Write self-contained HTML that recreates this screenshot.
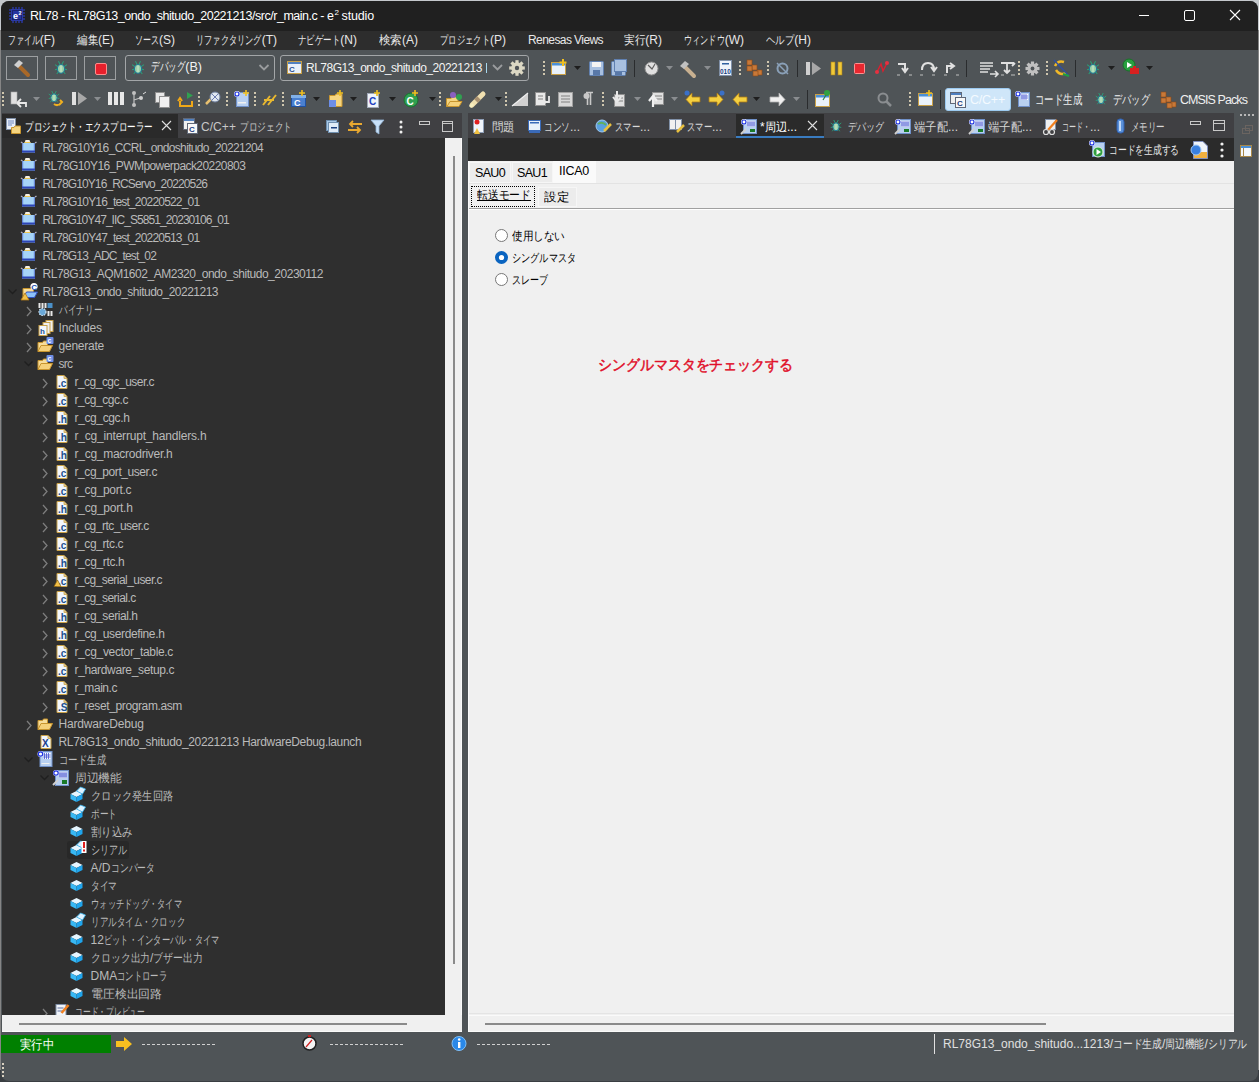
<!DOCTYPE html><html><head><meta charset="utf-8"><style>*{box-sizing:border-box;margin:0;padding:0}html,body{width:1259px;height:1082px;overflow:hidden;background:#c9ced3}body{position:relative;font-family:"Liberation Sans",sans-serif}.a{position:absolute}.t{position:absolute;white-space:nowrap}</style></head><body>
<div class="a" style="left:0px;top:0px;width:1259px;height:1082px;background:#858585;"></div>
<div class="a" style="left:0px;top:0px;width:1259px;height:30px;background:#c4c8cc;"></div>
<div class="a" style="left:0px;top:1070px;width:1259px;height:12px;background:#3a3e42;"></div>
<div class="a" style="left:1px;top:1px;width:1257px;height:1080px;background:#4f5457;border-radius:8px;overflow:hidden"></div>
<div class="a" style="left:1px;top:1px;width:1257px;height:30px;background:#202020;border-radius:8px 8px 0 0"></div>
<div class="a" style="left:1px;top:31px;width:1257px;height:19px;background:#2d2d2d;"></div>
<div class="a" style="left:6px;top:56px;width:32px;height:24px;background:transparent;border:1px solid #9c9fa1"></div>
<div class="a" style="left:45px;top:56px;width:32px;height:24px;background:transparent;border:1px solid #9c9fa1"></div>
<div class="a" style="left:84px;top:56px;width:32px;height:24px;background:transparent;border:1px solid #9c9fa1"></div>
<div class="a" style="left:125px;top:55px;width:150px;height:26px;background:transparent;border:1px solid #a3a6a8;border-radius:3px"></div>
<div class="a" style="left:280px;top:55px;width:249px;height:26px;background:transparent;border:1px solid #a3a6a8;border-radius:3px"></div>
<div class="a" style="left:486px;top:63px;width:1px;height:10px;background:#a8d8ee;"></div>
<div class="a" style="left:2px;top:113px;width:460px;height:25px;background:#404043;"></div>
<div class="a" style="left:2px;top:138px;width:460px;height:1px;background:#4b4c50;"></div>
<div class="a" style="left:2px;top:114px;width:176px;height:25px;background:#2a2a2a;"></div>
<div class="a" style="left:2px;top:138px;width:443px;height:877px;background:#2f2f2f;"></div>
<div class="a" style="left:445px;top:138px;width:17px;height:877px;background:#f0f0f0;"></div>
<div class="a" style="left:453px;top:156px;width:2px;height:808px;background:#8a8a8a;"></div>
<div class="a" style="left:468px;top:113px;width:766px;height:25px;background:#404043;"></div>
<div class="a" style="left:736px;top:114px;width:88px;height:24px;background:#2a2a2a;"></div>
<div class="a" style="left:736px;top:136px;width:88px;height:2px;background:#3a7cc0;"></div>
<div class="a" style="left:468px;top:138px;width:766px;height:23px;background:#2b2b2b;"></div>
<div class="a" style="left:468px;top:161px;width:766px;height:871px;background:#f0f0f0;"></div>
<div class="a" style="left:468px;top:161px;width:1px;height:871px;background:#fafafa;"></div>
<div class="a" style="left:469px;top:1013px;width:765px;height:1px;background:#e4e4e4;"></div>
<div class="a" style="left:469px;top:1015px;width:765px;height:1px;background:#fafafa;"></div>
<div class="a" style="left:468px;top:1031px;width:766px;height:1px;background:#fafafa;"></div>
<div class="a" style="left:461px;top:138px;width:1px;height:894px;background:#fafafa;"></div>
<div class="a" style="left:469px;top:162px;width:42px;height:21px;background:#ececec;border:1px solid #f6f6f6"></div>
<div class="a" style="left:512px;top:162px;width:41px;height:21px;background:#ececec;border:1px solid #f6f6f6"></div>
<div class="a" style="left:553px;top:161px;width:43px;height:23px;background:#fafafa;"></div>
<div class="a" style="left:469px;top:183px;width:765px;height:1px;background:#e3e3e3;"></div>
<div class="a" style="left:538px;top:187px;width:39px;height:20px;background:#ececec;border:1px solid #f6f6f6"></div>
<div class="a" style="left:471px;top:186px;width:64px;height:21px;background:transparent;border:1px dotted #000"></div>
<div class="a" style="left:477px;top:200px;width:54px;height:1px;background:#000;"></div>
<div class="a" style="left:469px;top:208px;width:765px;height:1px;background:#a0a0a0;"></div>
<div class="a" style="left:469px;top:209px;width:765px;height:1px;background:#ffffff;"></div>
<div class="a" style="left:485px;top:1023px;width:561px;height:2px;background:#8a8a8a;"></div>
<div class="a" style="left:1px;top:1035px;width:110px;height:18px;background:#008000;"></div>
<div class="a" style="left:934px;top:1034px;width:1px;height:20px;background:#e0e0e0;"></div>
<div class="a" style="left:67px;top:841px;width:62px;height:18px;background:#282828;border-radius:3px"></div>
<div class="a" style="left:945px;top:88px;width:66px;height:23px;background:#cfe6f9;border:1px solid #9ccaf0;border-radius:3px"></div>
<svg class="a" style="left:0;top:0" width="1259" height="1082" viewBox="0 0 1259 1082"><rect x="12.3" y="7" width="1.4" height="3" fill="#2b3aa6"/><rect x="12.3" y="20" width="1.4" height="3" fill="#2b3aa6"/><rect x="9" y="9.3" width="3" height="1.4" fill="#2b3aa6"/><rect x="22" y="9.3" width="3" height="1.4" fill="#2b3aa6"/><rect x="15.3" y="7" width="1.4" height="3" fill="#2b3aa6"/><rect x="15.3" y="20" width="1.4" height="3" fill="#2b3aa6"/><rect x="9" y="12.3" width="3" height="1.4" fill="#2b3aa6"/><rect x="22" y="12.3" width="3" height="1.4" fill="#2b3aa6"/><rect x="18.3" y="7" width="1.4" height="3" fill="#2b3aa6"/><rect x="18.3" y="20" width="1.4" height="3" fill="#2b3aa6"/><rect x="9" y="15.3" width="3" height="1.4" fill="#2b3aa6"/><rect x="22" y="15.3" width="3" height="1.4" fill="#2b3aa6"/><rect x="21.3" y="7" width="1.4" height="3" fill="#2b3aa6"/><rect x="21.3" y="20" width="1.4" height="3" fill="#2b3aa6"/><rect x="9" y="18.3" width="3" height="1.4" fill="#2b3aa6"/><rect x="22" y="18.3" width="3" height="1.4" fill="#2b3aa6"/><rect x="11" y="9" width="12" height="12" fill="#2b3aa6"/><rect x="12.5" y="10.5" width="9" height="9" fill="#2534a0" stroke="#1a2470" stroke-width="1"/><text x="13" y="19" font-size="9" font-weight="bold" fill="#fff" font-family="Liberation Sans">e</text><text x="18.6" y="14.5" font-size="5.5" font-weight="bold" fill="#fff" font-family="Liberation Sans">2</text><rect x="1139" y="15" width="10" height="1" fill="#fff"/><rect x="1184.5" y="10.5" width="10" height="10" rx="1.5" fill="none" stroke="#fff" stroke-width="1"/><path d="M1230 10 L1240 20 M1240 10 L1230 20" stroke="#fff" stroke-width="1.1"/><path d="M259.5 65 L264 69.5 L268.5 65" fill="none" stroke="#9a9c9e" stroke-width="1.8"/><path d="M493 65 L497.5 69.5 L502 65" fill="none" stroke="#9a9c9e" stroke-width="1.8"/><path d="M162 121 L171 130 M171 121 L162 130" stroke="#e0e0e0" stroke-width="1.1"/><path d="M808 121 L817 130 M817 121 L808 130" stroke="#e0e0e0" stroke-width="1.1"/><circle cx="501.5" cy="235.5" r="6" fill="#fff" stroke="#777" stroke-width="1"/><circle cx="501.5" cy="257.5" r="6.5" fill="#0a64c0"/><circle cx="501.5" cy="257.5" r="2.6" fill="#fff"/><circle cx="501.5" cy="279.5" r="6" fill="#fff" stroke="#777" stroke-width="1"/><line x1="142" y1="1044.5" x2="217" y2="1044.5" stroke="#d0d0d0" stroke-width="1" stroke-dasharray="3,2"/><line x1="330" y1="1044.5" x2="403" y2="1044.5" stroke="#d0d0d0" stroke-width="1" stroke-dasharray="3,2"/><line x1="477" y1="1044.5" x2="551" y2="1044.5" stroke="#d0d0d0" stroke-width="1" stroke-dasharray="3,2"/><path d="M24.5 143 L25.5 140 H29.5 L30.5 143 Z" fill="#f4f0e4"/><rect x="24.5" y="142" width="6" height="1.2" fill="#f0c850"/><path d="M21.0 142 L22.5 143 M35.0 143 L36.5 142" stroke="#b0b0c0" stroke-width="1.5"/><rect x="22.0" y="143" width="13" height="9.5" fill="#a6d4f8"/><rect x="22.0" y="143" width="1.2" height="9.5" fill="#6a8ad8"/><rect x="33.8" y="143" width="1.2" height="9.5" fill="#6a8ad8"/><rect x="22.0" y="150.5" width="13" height="2" fill="#2c44b8"/><path d="M24.5 161 L25.5 158 H29.5 L30.5 161 Z" fill="#f4f0e4"/><rect x="24.5" y="160" width="6" height="1.2" fill="#f0c850"/><path d="M21.0 160 L22.5 161 M35.0 161 L36.5 160" stroke="#b0b0c0" stroke-width="1.5"/><rect x="22.0" y="161" width="13" height="9.5" fill="#a6d4f8"/><rect x="22.0" y="161" width="1.2" height="9.5" fill="#6a8ad8"/><rect x="33.8" y="161" width="1.2" height="9.5" fill="#6a8ad8"/><rect x="22.0" y="168.5" width="13" height="2" fill="#2c44b8"/><path d="M24.5 179 L25.5 176 H29.5 L30.5 179 Z" fill="#f4f0e4"/><rect x="24.5" y="178" width="6" height="1.2" fill="#f0c850"/><path d="M21.0 178 L22.5 179 M35.0 179 L36.5 178" stroke="#b0b0c0" stroke-width="1.5"/><rect x="22.0" y="179" width="13" height="9.5" fill="#a6d4f8"/><rect x="22.0" y="179" width="1.2" height="9.5" fill="#6a8ad8"/><rect x="33.8" y="179" width="1.2" height="9.5" fill="#6a8ad8"/><rect x="22.0" y="186.5" width="13" height="2" fill="#2c44b8"/><path d="M24.5 197 L25.5 194 H29.5 L30.5 197 Z" fill="#f4f0e4"/><rect x="24.5" y="196" width="6" height="1.2" fill="#f0c850"/><path d="M21.0 196 L22.5 197 M35.0 197 L36.5 196" stroke="#b0b0c0" stroke-width="1.5"/><rect x="22.0" y="197" width="13" height="9.5" fill="#a6d4f8"/><rect x="22.0" y="197" width="1.2" height="9.5" fill="#6a8ad8"/><rect x="33.8" y="197" width="1.2" height="9.5" fill="#6a8ad8"/><rect x="22.0" y="204.5" width="13" height="2" fill="#2c44b8"/><path d="M24.5 215 L25.5 212 H29.5 L30.5 215 Z" fill="#f4f0e4"/><rect x="24.5" y="214" width="6" height="1.2" fill="#f0c850"/><path d="M21.0 214 L22.5 215 M35.0 215 L36.5 214" stroke="#b0b0c0" stroke-width="1.5"/><rect x="22.0" y="215" width="13" height="9.5" fill="#a6d4f8"/><rect x="22.0" y="215" width="1.2" height="9.5" fill="#6a8ad8"/><rect x="33.8" y="215" width="1.2" height="9.5" fill="#6a8ad8"/><rect x="22.0" y="222.5" width="13" height="2" fill="#2c44b8"/><path d="M24.5 233 L25.5 230 H29.5 L30.5 233 Z" fill="#f4f0e4"/><rect x="24.5" y="232" width="6" height="1.2" fill="#f0c850"/><path d="M21.0 232 L22.5 233 M35.0 233 L36.5 232" stroke="#b0b0c0" stroke-width="1.5"/><rect x="22.0" y="233" width="13" height="9.5" fill="#a6d4f8"/><rect x="22.0" y="233" width="1.2" height="9.5" fill="#6a8ad8"/><rect x="33.8" y="233" width="1.2" height="9.5" fill="#6a8ad8"/><rect x="22.0" y="240.5" width="13" height="2" fill="#2c44b8"/><path d="M24.5 251 L25.5 248 H29.5 L30.5 251 Z" fill="#f4f0e4"/><rect x="24.5" y="250" width="6" height="1.2" fill="#f0c850"/><path d="M21.0 250 L22.5 251 M35.0 251 L36.5 250" stroke="#b0b0c0" stroke-width="1.5"/><rect x="22.0" y="251" width="13" height="9.5" fill="#a6d4f8"/><rect x="22.0" y="251" width="1.2" height="9.5" fill="#6a8ad8"/><rect x="33.8" y="251" width="1.2" height="9.5" fill="#6a8ad8"/><rect x="22.0" y="258.5" width="13" height="2" fill="#2c44b8"/><path d="M24.5 269 L25.5 266 H29.5 L30.5 269 Z" fill="#f4f0e4"/><rect x="24.5" y="268" width="6" height="1.2" fill="#f0c850"/><path d="M21.0 268 L22.5 269 M35.0 269 L36.5 268" stroke="#b0b0c0" stroke-width="1.5"/><rect x="22.0" y="269" width="13" height="9.5" fill="#a6d4f8"/><rect x="22.0" y="269" width="1.2" height="9.5" fill="#6a8ad8"/><rect x="33.8" y="269" width="1.2" height="9.5" fill="#6a8ad8"/><rect x="22.0" y="276.5" width="13" height="2" fill="#2c44b8"/><path d="M23.0 288.5 H33.5 V297 H23.0 Z" fill="#f7dd9a" stroke="#c8952e" stroke-width="1"/><path d="M23.5 297.5 L26.5 292 H37.5 L34.5 297.5 Z" fill="#8cc0f8" stroke="#3050c0" stroke-width="1"/><circle cx="34.0" cy="286.5" r="3.6" fill="#fff"/><text x="31.3" y="289.5" font-size="8" font-weight="bold" fill="#1a50b0" font-family="Liberation Sans">C</text><path d="M21.0 300 L25.0 293 L29.0 300 Z" fill="#f2c048" stroke="#b07818" stroke-width="0.8"/><path d="M8.5 289.5 L12.5 293.5 L16.5 289.5" fill="none" stroke="#1f1f1f" stroke-width="1.3"/><rect x="38.5" y="303" width="2" height="5" fill="#e8e8e8"/><rect x="41.5" y="303" width="2" height="5" fill="#e8e8e8"/><rect x="44.5" y="303" width="2" height="5" fill="#e8e8e8"/><rect x="47.5" y="303" width="5" height="5" fill="#4a90c8"/><circle cx="42.5" cy="312" r="3.5" fill="#6aa8d8" stroke="#d0e4f4" stroke-width="1.2" stroke-dasharray="1.5,1"/><rect x="47.5" y="311" width="2" height="5" fill="#e8e8e8"/><rect x="50.5" y="311" width="2" height="5" fill="#e8e8e8"/><path d="M27.0 307 L31.0 311.5 L27.0 316" fill="none" stroke="#7d7d7d" stroke-width="1.3"/><rect x="46.0" y="320.5" width="7" height="11" fill="#f0f0f0" stroke="#c9a24a"/><rect x="43.0" y="322.5" width="7" height="11" fill="#f0f0f0" stroke="#c9a24a"/><rect x="39.0" y="325.5" width="8" height="10" fill="#f4f8fd" stroke="#c9a24a"/><text x="40.0" y="334" font-size="8" font-weight="bold" fill="#1a4f8f" font-family="Liberation Sans">h</text><path d="M27.0 325 L31.0 329.5 L27.0 334" fill="none" stroke="#7d7d7d" stroke-width="1.3"/><path d="M38.0 342.5 H42.5 L43.5 341 H47.5 V351.5 H38.0 Z" fill="#f7dd9a" stroke="#c8952e" stroke-width="1"/><path d="M38.0 351.5 L41.0 345.5 H52.5 L49.5 351.5 Z" fill="#f5d17a" stroke="#c8952e" stroke-width="1"/><rect x="46.5" y="337" width="7" height="7" rx="1" fill="#6d8ee8"/><text x="47.5" y="343" font-size="7" font-weight="bold" fill="#fff" font-family="Liberation Sans">c</text><path d="M27.0 343 L31.0 347.5 L27.0 352" fill="none" stroke="#7d7d7d" stroke-width="1.3"/><path d="M38.0 360.5 H42.5 L43.5 359 H47.5 V369.5 H38.0 Z" fill="#f7dd9a" stroke="#c8952e" stroke-width="1"/><path d="M38.0 369.5 L41.0 363.5 H52.5 L49.5 369.5 Z" fill="#f5d17a" stroke="#c8952e" stroke-width="1"/><rect x="46.5" y="355" width="7" height="7" rx="1" fill="#6d8ee8"/><text x="47.5" y="361" font-size="7" font-weight="bold" fill="#fff" font-family="Liberation Sans">c</text><path d="M24.5 361.5 L28.5 365.5 L32.5 361.5" fill="none" stroke="#1f1f1f" stroke-width="1.3"/><path d="M57.0 375.5 H64.0 L67.0 378.5 V388.5 H57.0 Z" fill="#f2f7fd" stroke="#c9a24a" stroke-width="1"/><path d="M64.0 375.5 V378.5 H67.0" fill="#e8cf8a" stroke="#c9a24a" stroke-width="0.8"/><text x="58.0" y="386.5" font-size="10" font-weight="bold" fill="#1a4f8f" font-family="Liberation Sans">.c</text><path d="M43.0 379 L47.0 383.5 L43.0 388" fill="none" stroke="#7d7d7d" stroke-width="1.3"/><path d="M57.0 393.5 H64.0 L67.0 396.5 V406.5 H57.0 Z" fill="#f2f7fd" stroke="#c9a24a" stroke-width="1"/><path d="M64.0 393.5 V396.5 H67.0" fill="#e8cf8a" stroke="#c9a24a" stroke-width="0.8"/><text x="58.0" y="404.5" font-size="10" font-weight="bold" fill="#1a4f8f" font-family="Liberation Sans">.c</text><path d="M43.0 397 L47.0 401.5 L43.0 406" fill="none" stroke="#7d7d7d" stroke-width="1.3"/><path d="M57.0 411.5 H64.0 L67.0 414.5 V424.5 H57.0 Z" fill="#f2f7fd" stroke="#c9a24a" stroke-width="1"/><path d="M64.0 411.5 V414.5 H67.0" fill="#e8cf8a" stroke="#c9a24a" stroke-width="0.8"/><text x="58.0" y="422.5" font-size="10" font-weight="bold" fill="#1a4f8f" font-family="Liberation Sans">.h</text><path d="M43.0 415 L47.0 419.5 L43.0 424" fill="none" stroke="#7d7d7d" stroke-width="1.3"/><path d="M57.0 429.5 H64.0 L67.0 432.5 V442.5 H57.0 Z" fill="#f2f7fd" stroke="#c9a24a" stroke-width="1"/><path d="M64.0 429.5 V432.5 H67.0" fill="#e8cf8a" stroke="#c9a24a" stroke-width="0.8"/><text x="58.0" y="440.5" font-size="10" font-weight="bold" fill="#1a4f8f" font-family="Liberation Sans">.h</text><path d="M43.0 433 L47.0 437.5 L43.0 442" fill="none" stroke="#7d7d7d" stroke-width="1.3"/><path d="M57.0 447.5 H64.0 L67.0 450.5 V460.5 H57.0 Z" fill="#f2f7fd" stroke="#c9a24a" stroke-width="1"/><path d="M64.0 447.5 V450.5 H67.0" fill="#e8cf8a" stroke="#c9a24a" stroke-width="0.8"/><text x="58.0" y="458.5" font-size="10" font-weight="bold" fill="#1a4f8f" font-family="Liberation Sans">.h</text><path d="M43.0 451 L47.0 455.5 L43.0 460" fill="none" stroke="#7d7d7d" stroke-width="1.3"/><path d="M57.0 465.5 H64.0 L67.0 468.5 V478.5 H57.0 Z" fill="#f2f7fd" stroke="#c9a24a" stroke-width="1"/><path d="M64.0 465.5 V468.5 H67.0" fill="#e8cf8a" stroke="#c9a24a" stroke-width="0.8"/><text x="58.0" y="476.5" font-size="10" font-weight="bold" fill="#1a4f8f" font-family="Liberation Sans">.c</text><path d="M43.0 469 L47.0 473.5 L43.0 478" fill="none" stroke="#7d7d7d" stroke-width="1.3"/><path d="M57.0 483.5 H64.0 L67.0 486.5 V496.5 H57.0 Z" fill="#f2f7fd" stroke="#c9a24a" stroke-width="1"/><path d="M64.0 483.5 V486.5 H67.0" fill="#e8cf8a" stroke="#c9a24a" stroke-width="0.8"/><text x="58.0" y="494.5" font-size="10" font-weight="bold" fill="#1a4f8f" font-family="Liberation Sans">.c</text><path d="M43.0 487 L47.0 491.5 L43.0 496" fill="none" stroke="#7d7d7d" stroke-width="1.3"/><path d="M57.0 501.5 H64.0 L67.0 504.5 V514.5 H57.0 Z" fill="#f2f7fd" stroke="#c9a24a" stroke-width="1"/><path d="M64.0 501.5 V504.5 H67.0" fill="#e8cf8a" stroke="#c9a24a" stroke-width="0.8"/><text x="58.0" y="512.5" font-size="10" font-weight="bold" fill="#1a4f8f" font-family="Liberation Sans">.h</text><path d="M43.0 505 L47.0 509.5 L43.0 514" fill="none" stroke="#7d7d7d" stroke-width="1.3"/><path d="M57.0 519.5 H64.0 L67.0 522.5 V532.5 H57.0 Z" fill="#f2f7fd" stroke="#c9a24a" stroke-width="1"/><path d="M64.0 519.5 V522.5 H67.0" fill="#e8cf8a" stroke="#c9a24a" stroke-width="0.8"/><text x="58.0" y="530.5" font-size="10" font-weight="bold" fill="#1a4f8f" font-family="Liberation Sans">.c</text><path d="M43.0 523 L47.0 527.5 L43.0 532" fill="none" stroke="#7d7d7d" stroke-width="1.3"/><path d="M57.0 537.5 H64.0 L67.0 540.5 V550.5 H57.0 Z" fill="#f2f7fd" stroke="#c9a24a" stroke-width="1"/><path d="M64.0 537.5 V540.5 H67.0" fill="#e8cf8a" stroke="#c9a24a" stroke-width="0.8"/><text x="58.0" y="548.5" font-size="10" font-weight="bold" fill="#1a4f8f" font-family="Liberation Sans">.c</text><path d="M43.0 541 L47.0 545.5 L43.0 550" fill="none" stroke="#7d7d7d" stroke-width="1.3"/><path d="M57.0 555.5 H64.0 L67.0 558.5 V568.5 H57.0 Z" fill="#f2f7fd" stroke="#c9a24a" stroke-width="1"/><path d="M64.0 555.5 V558.5 H67.0" fill="#e8cf8a" stroke="#c9a24a" stroke-width="0.8"/><text x="58.0" y="566.5" font-size="10" font-weight="bold" fill="#1a4f8f" font-family="Liberation Sans">.h</text><path d="M43.0 559 L47.0 563.5 L43.0 568" fill="none" stroke="#7d7d7d" stroke-width="1.3"/><path d="M57.0 573.5 H64.0 L67.0 576.5 V586.5 H57.0 Z" fill="#f2f7fd" stroke="#c9a24a" stroke-width="1"/><path d="M64.0 573.5 V576.5 H67.0" fill="#e8cf8a" stroke="#c9a24a" stroke-width="0.8"/><text x="58.0" y="584.5" font-size="10" font-weight="bold" fill="#1a4f8f" font-family="Liberation Sans">.c</text><path d="M54.0 586.5 L57.5 580 L61.0 586.5 Z" fill="#f2c048" stroke="#8a6010" stroke-width="0.7"/><path d="M43.0 577 L47.0 581.5 L43.0 586" fill="none" stroke="#7d7d7d" stroke-width="1.3"/><path d="M57.0 591.5 H64.0 L67.0 594.5 V604.5 H57.0 Z" fill="#f2f7fd" stroke="#c9a24a" stroke-width="1"/><path d="M64.0 591.5 V594.5 H67.0" fill="#e8cf8a" stroke="#c9a24a" stroke-width="0.8"/><text x="58.0" y="602.5" font-size="10" font-weight="bold" fill="#1a4f8f" font-family="Liberation Sans">.c</text><path d="M43.0 595 L47.0 599.5 L43.0 604" fill="none" stroke="#7d7d7d" stroke-width="1.3"/><path d="M57.0 609.5 H64.0 L67.0 612.5 V622.5 H57.0 Z" fill="#f2f7fd" stroke="#c9a24a" stroke-width="1"/><path d="M64.0 609.5 V612.5 H67.0" fill="#e8cf8a" stroke="#c9a24a" stroke-width="0.8"/><text x="58.0" y="620.5" font-size="10" font-weight="bold" fill="#1a4f8f" font-family="Liberation Sans">.h</text><path d="M43.0 613 L47.0 617.5 L43.0 622" fill="none" stroke="#7d7d7d" stroke-width="1.3"/><path d="M57.0 627.5 H64.0 L67.0 630.5 V640.5 H57.0 Z" fill="#f2f7fd" stroke="#c9a24a" stroke-width="1"/><path d="M64.0 627.5 V630.5 H67.0" fill="#e8cf8a" stroke="#c9a24a" stroke-width="0.8"/><text x="58.0" y="638.5" font-size="10" font-weight="bold" fill="#1a4f8f" font-family="Liberation Sans">.h</text><path d="M43.0 631 L47.0 635.5 L43.0 640" fill="none" stroke="#7d7d7d" stroke-width="1.3"/><path d="M57.0 645.5 H64.0 L67.0 648.5 V658.5 H57.0 Z" fill="#f2f7fd" stroke="#c9a24a" stroke-width="1"/><path d="M64.0 645.5 V648.5 H67.0" fill="#e8cf8a" stroke="#c9a24a" stroke-width="0.8"/><text x="58.0" y="656.5" font-size="10" font-weight="bold" fill="#1a4f8f" font-family="Liberation Sans">.c</text><path d="M43.0 649 L47.0 653.5 L43.0 658" fill="none" stroke="#7d7d7d" stroke-width="1.3"/><path d="M57.0 663.5 H64.0 L67.0 666.5 V676.5 H57.0 Z" fill="#f2f7fd" stroke="#c9a24a" stroke-width="1"/><path d="M64.0 663.5 V666.5 H67.0" fill="#e8cf8a" stroke="#c9a24a" stroke-width="0.8"/><text x="58.0" y="674.5" font-size="10" font-weight="bold" fill="#1a4f8f" font-family="Liberation Sans">.c</text><path d="M43.0 667 L47.0 671.5 L43.0 676" fill="none" stroke="#7d7d7d" stroke-width="1.3"/><path d="M57.0 681.5 H64.0 L67.0 684.5 V694.5 H57.0 Z" fill="#f2f7fd" stroke="#c9a24a" stroke-width="1"/><path d="M64.0 681.5 V684.5 H67.0" fill="#e8cf8a" stroke="#c9a24a" stroke-width="0.8"/><text x="58.0" y="692.5" font-size="10" font-weight="bold" fill="#1a4f8f" font-family="Liberation Sans">.c</text><path d="M43.0 685 L47.0 689.5 L43.0 694" fill="none" stroke="#7d7d7d" stroke-width="1.3"/><path d="M57.0 699.5 H64.0 L67.0 702.5 V712.5 H57.0 Z" fill="#f2f7fd" stroke="#c9a24a" stroke-width="1"/><path d="M64.0 699.5 V702.5 H67.0" fill="#e8cf8a" stroke="#c9a24a" stroke-width="0.8"/><text x="58.0" y="710.5" font-size="10" font-weight="bold" fill="#1a4f8f" font-family="Liberation Sans">.S</text><path d="M43.0 703 L47.0 707.5 L43.0 712" fill="none" stroke="#7d7d7d" stroke-width="1.3"/><path d="M38.0 720.5 H42.5 L43.5 719 H47.5 V729.5 H38.0 Z" fill="#f7dd9a" stroke="#c8952e" stroke-width="1"/><path d="M38.0 729.5 L41.0 723.5 H52.5 L49.5 729.5 Z" fill="#f5d17a" stroke="#c8952e" stroke-width="1"/><path d="M27.0 721 L31.0 725.5 L27.0 730" fill="none" stroke="#7d7d7d" stroke-width="1.3"/><path d="M41.0 735.5 H48.0 L51.0 738.5 V748.5 H41.0 Z" fill="#f2f7fd" stroke="#c9a24a" stroke-width="1"/><path d="M48.0 735.5 V738.5 H51.0" fill="#e8cf8a" stroke="#c9a24a" stroke-width="0.8"/><text x="42.0" y="747" font-size="10" font-weight="bold" fill="#1a3f8f" font-family="Liberation Sans">X</text><rect x="40.0" y="751.5" width="12" height="15" fill="#b8d0f0" stroke="#7090c8"/><rect x="43.5" y="753" width="7" height="6" fill="#fff"/><path d="M44.5 753 V759 M46.5 753 V759 M48.5 753 V759 M43.5 755 H50.5 M43.5 757 H50.5" stroke="#4050d0" stroke-width="0.8"/><rect x="41.5" y="763" width="8" height="1" fill="#f0f0f0"/><circle cx="40.5" cy="754" r="3" fill="#fff"/><circle cx="40.5" cy="754" r="2.2" fill="none" stroke="#1a30e0" stroke-width="1.2"/><path d="M24.5 757.5 L28.5 761.5 L32.5 757.5" fill="none" stroke="#1f1f1f" stroke-width="1.3"/><rect x="55.5" y="770.5" width="13" height="15" fill="#b8d0f0" stroke="#7090c8"/><rect x="59.0" y="772" width="8" height="6" fill="#fff"/><path d="M60.0 772 V778 M62.0 772 V778 M64.0 772 V778 M66.0 772 V778 M59.0 774 H67.0 M59.0 776 H67.0" stroke="#4050d0" stroke-width="0.8"/><rect x="62.0" y="780" width="5" height="4" fill="#1a7a2a"/><path d="M53.0 785 L58.0 780" stroke="#d0d0d0" stroke-width="2"/><circle cx="56.0" cy="773" r="3" fill="#fff"/><circle cx="56.0" cy="773" r="2.2" fill="none" stroke="#1a30e0" stroke-width="1.2"/><path d="M40.5 775.5 L44.5 779.5 L48.5 775.5" fill="none" stroke="#1f1f1f" stroke-width="1.3"/><path d="M70.5 794 L76.5 791 L82.5 794 L76.5 797 Z" fill="#e6f6ff"/><path d="M70.5 794 L76.5 797 V802 L70.5 799 Z" fill="#38b8f4"/><path d="M82.5 794 L76.5 797 V802 L82.5 799 Z" fill="#1ea4ec"/><path d="M76.5 791 L80.5 787 L85.5 789 L82.5 794 Z" fill="#dff2ff" stroke="#38b8f4" stroke-width="0.8"/><path d="M70.5 812 L76.5 809 L82.5 812 L76.5 815 Z" fill="#e6f6ff"/><path d="M70.5 812 L76.5 815 V820 L70.5 817 Z" fill="#38b8f4"/><path d="M82.5 812 L76.5 815 V820 L82.5 817 Z" fill="#1ea4ec"/><path d="M76.5 809 L80.5 805 L85.5 807 L82.5 812 Z" fill="#dff2ff" stroke="#38b8f4" stroke-width="0.8"/><path d="M70.5 829 L76.5 826 L82.5 829 L76.5 832 Z" fill="#e6f6ff"/><path d="M70.5 829 L76.5 832 V837 L70.5 834 Z" fill="#38b8f4"/><path d="M82.5 829 L76.5 832 V837 L82.5 834 Z" fill="#1ea4ec"/><path d="M70.5 848 L76.5 845 L82.5 848 L76.5 851 Z" fill="#e6f6ff"/><path d="M70.5 848 L76.5 851 V856 L70.5 853 Z" fill="#38b8f4"/><path d="M82.5 848 L76.5 851 V856 L82.5 853 Z" fill="#1ea4ec"/><path d="M76.5 845 L80.5 841 L85.5 843 L82.5 848 Z" fill="#dff2ff" stroke="#38b8f4" stroke-width="0.8"/><rect x="81.5" y="841" width="5" height="12" fill="#fff"/><rect x="83.0" y="842" width="2" height="6" fill="#e02020"/><rect x="83.0" y="849.5" width="2" height="2" fill="#e02020"/><path d="M70.5 865 L76.5 862 L82.5 865 L76.5 868 Z" fill="#e6f6ff"/><path d="M70.5 865 L76.5 868 V873 L70.5 870 Z" fill="#38b8f4"/><path d="M82.5 865 L76.5 868 V873 L82.5 870 Z" fill="#1ea4ec"/><path d="M70.5 883 L76.5 880 L82.5 883 L76.5 886 Z" fill="#e6f6ff"/><path d="M70.5 883 L76.5 886 V891 L70.5 888 Z" fill="#38b8f4"/><path d="M82.5 883 L76.5 886 V891 L82.5 888 Z" fill="#1ea4ec"/><path d="M70.5 901 L76.5 898 L82.5 901 L76.5 904 Z" fill="#e6f6ff"/><path d="M70.5 901 L76.5 904 V909 L70.5 906 Z" fill="#38b8f4"/><path d="M82.5 901 L76.5 904 V909 L82.5 906 Z" fill="#1ea4ec"/><path d="M70.5 920 L76.5 917 L82.5 920 L76.5 923 Z" fill="#e6f6ff"/><path d="M70.5 920 L76.5 923 V928 L70.5 925 Z" fill="#38b8f4"/><path d="M82.5 920 L76.5 923 V928 L82.5 925 Z" fill="#1ea4ec"/><path d="M76.5 917 L80.5 913 L85.5 915 L82.5 920 Z" fill="#dff2ff" stroke="#38b8f4" stroke-width="0.8"/><path d="M70.5 937 L76.5 934 L82.5 937 L76.5 940 Z" fill="#e6f6ff"/><path d="M70.5 937 L76.5 940 V945 L70.5 942 Z" fill="#38b8f4"/><path d="M82.5 937 L76.5 940 V945 L82.5 942 Z" fill="#1ea4ec"/><path d="M70.5 955 L76.5 952 L82.5 955 L76.5 958 Z" fill="#e6f6ff"/><path d="M70.5 955 L76.5 958 V963 L70.5 960 Z" fill="#38b8f4"/><path d="M82.5 955 L76.5 958 V963 L82.5 960 Z" fill="#1ea4ec"/><path d="M70.5 973 L76.5 970 L82.5 973 L76.5 976 Z" fill="#e6f6ff"/><path d="M70.5 973 L76.5 976 V981 L70.5 978 Z" fill="#38b8f4"/><path d="M82.5 973 L76.5 976 V981 L82.5 978 Z" fill="#1ea4ec"/><path d="M70.5 991 L76.5 988 L82.5 991 L76.5 994 Z" fill="#e6f6ff"/><path d="M70.5 991 L76.5 994 V999 L70.5 996 Z" fill="#38b8f4"/><path d="M82.5 991 L76.5 994 V999 L82.5 996 Z" fill="#1ea4ec"/><rect x="56.0" y="1004.5" width="10" height="13" fill="#f0f4fa" stroke="#8090a8"/><path d="M57.5 1008 H63.5 M57.5 1011 H63.5" stroke="#6070a0"/><path d="M61.5 1013 L68.5 1005" stroke="#f08020" stroke-width="2.5"/><path d="M43.0 1009 L47.0 1013.5 L43.0 1018" fill="none" stroke="#7d7d7d" stroke-width="1.3"/><path d="M19 66 L28 75" stroke="#a86828" stroke-width="4" stroke-linecap="round"/><path d="M14 65 L19 60 L23 63 L18 68 Z" fill="#d0d0d0"/><g transform="translate(61,68) scale(0.85)"><path d="M-7 -4 L-3 -1 M7 -4 L3 -1 M-7 2 L-3 1 M7 2 L3 1 M-5 7 L-2 3 M5 7 L2 3 M-3 -8 L-1 -4 M3 -8 L1 -4" stroke="#2aa078" stroke-width="1.2"/><ellipse cx="0" cy="1" rx="4.2" ry="5.2" fill="#9ad0a8" stroke="#1a7a9a" stroke-width="1.3"/><path d="M0 -3 V5" stroke="#d8f0d8" stroke-width="1"/></g><rect x="95.5" y="63.5" width="11" height="11" rx="1.5" fill="#e8202c" stroke="#ff8c8c" stroke-width="1"/><g transform="translate(138,68) scale(0.85)"><path d="M-7 -4 L-3 -1 M7 -4 L3 -1 M-7 2 L-3 1 M7 2 L3 1 M-5 7 L-2 3 M5 7 L2 3 M-3 -8 L-1 -4 M3 -8 L1 -4" stroke="#2aa078" stroke-width="1.2"/><ellipse cx="0" cy="1" rx="4.2" ry="5.2" fill="#9ad0a8" stroke="#1a7a9a" stroke-width="1.3"/><path d="M0 -3 V5" stroke="#d8f0d8" stroke-width="1"/></g><rect x="287.5" y="61.5" width="14" height="12" fill="#e8f0fa" stroke="#c8a048"/><rect x="288" y="62" width="13" height="2" fill="#5080c0"/><text x="289" y="72" font-size="8" font-weight="bold" fill="#2a5090" font-family="Liberation Sans">C</text><g transform="translate(517,68)"><rect x="-1.6" y="-7.8" width="3.2" height="15.6" fill="#dcd8c4" transform="rotate(0)"/><rect x="-1.6" y="-7.8" width="3.2" height="15.6" fill="#dcd8c4" transform="rotate(45)"/><rect x="-1.6" y="-7.8" width="3.2" height="15.6" fill="#dcd8c4" transform="rotate(90)"/><rect x="-1.6" y="-7.8" width="3.2" height="15.6" fill="#dcd8c4" transform="rotate(135)"/><circle r="5.8" fill="#dcd8c4"/><circle r="2.20" fill="#4f5457"/></g><rect x="543" y="61" width="2" height="2" fill="#cfc6ae"/><rect x="543" y="65" width="2" height="2" fill="#cfc6ae"/><rect x="543" y="69" width="2" height="2" fill="#cfc6ae"/><rect x="543" y="73" width="2" height="2" fill="#cfc6ae"/><rect x="551.5" y="62.5" width="14" height="12" fill="#eaf2fb" stroke="#c8a048"/><rect x="552" y="63" width="13" height="2.5" fill="#4a90d8"/><path d="M563 59 V66 M559.5 62.5 H566.5" stroke="#f0c020" stroke-width="2"/><path d="M574 66 H581 L577.5 70 Z" fill="#1e1e1e"/><rect x="589.5" y="61.5" width="14" height="14" rx="1" fill="#a8c0e0" stroke="#6080b0"/><rect x="592" y="62" width="9" height="5" fill="#f4f4f4"/><rect x="593" y="70" width="7" height="5" fill="#5878a8"/><rect x="611.5" y="61.5" width="14" height="14" rx="1" fill="#a8c0e0" stroke="#6080b0"/><rect x="614" y="62" width="9" height="5" fill="#f4f4f4"/><rect x="615" y="70" width="7" height="5" fill="#5878a8"/><rect x="614.5" y="59.5" width="12" height="12" fill="#a8c0e0" stroke="#6080b0"/><rect x="634" y="60" width="1" height="17" fill="#2a2c2e"/><circle cx="651.5" cy="68.5" r="6.5" fill="#e0e0e0" stroke="#909090"/><path d="M648 65 L652 69 L655 64" stroke="#606060" stroke-width="1.2" fill="none"/><path d="M666 66 H673 L669.5 70 Z" fill="#8a8d90"/><path d="M685 67 L694 76" stroke="#c8b090" stroke-width="4" stroke-linecap="round"/><path d="M680 66 L685 61 L689 64 L684 69 Z" fill="#c0c0c0"/><path d="M704 66 H711 L707.5 70 Z" fill="#8a8d90"/><rect x="719.5" y="60.5" width="12" height="15" fill="#f0f4fa" stroke="#8090a8"/><text x="720" y="74" font-size="6.5" font-weight="bold" fill="#1a3f7f" font-family="Liberation Sans">010</text><rect x="722" y="63" width="7" height="1.5" fill="#3060a0"/><rect x="739" y="61" width="2" height="2" fill="#cfc6ae"/><rect x="739" y="65" width="2" height="2" fill="#cfc6ae"/><rect x="739" y="69" width="2" height="2" fill="#cfc6ae"/><rect x="739" y="73" width="2" height="2" fill="#cfc6ae"/><rect x="747" y="60" width="5" height="5" fill="#c87838" stroke="#8a4a18" stroke-width="0.6"/><rect x="752" y="65" width="5" height="5" fill="#c87838" stroke="#8a4a18" stroke-width="0.6"/><rect x="757" y="70" width="5" height="5" fill="#c87838" stroke="#8a4a18" stroke-width="0.6"/><rect x="747" y="66" width="5" height="5" fill="#c87838" stroke="#8a4a18" stroke-width="0.6"/><rect x="753" y="71" width="5" height="5" fill="#c87838" stroke="#8a4a18" stroke-width="0.6"/><rect x="767" y="61" width="2" height="2" fill="#cfc6ae"/><rect x="767" y="65" width="2" height="2" fill="#cfc6ae"/><rect x="767" y="69" width="2" height="2" fill="#cfc6ae"/><rect x="767" y="73" width="2" height="2" fill="#cfc6ae"/><circle cx="782.5" cy="68.5" r="5" fill="none" stroke="#8aa0b8" stroke-width="2"/><path d="M777 63 L788 74" stroke="#8aa0b8" stroke-width="1.5"/><rect x="797" y="60" width="1" height="17" fill="#2a2c2e"/><rect x="806" y="62" width="4" height="13" fill="#d0d0d0"/><path d="M812 62 L821 68.5 L812 75 Z" fill="#a8a8a8"/><rect x="831" y="62" width="4" height="13" fill="#f0c838" stroke="#a88018" stroke-width="0.6"/><rect x="838" y="62" width="4" height="13" fill="#f0c838" stroke="#a88018" stroke-width="0.6"/><rect x="854.5" y="63.5" width="10" height="10" rx="1" fill="#e82830" stroke="#ff9090"/><path d="M877 72 L881 64 L883 71 L887 63" stroke="#d82030" stroke-width="1.5" fill="none"/><circle cx="877" cy="72" r="2" fill="#e83040"/><circle cx="887" cy="63" r="2" fill="#e83040"/><path d="M898 64 H905 V71 M902 68 L905 72 L908 68" stroke="#e0e0e0" stroke-width="2" fill="none"/><path d="M897 75 H900 M909 75 H912" stroke="#c0c0c0" stroke-width="1"/><path d="M922 70 Q922 63 928 63 Q934 63 934 70 M931 67 L934 71 L937 67" stroke="#e0e0e0" stroke-width="2" fill="none"/><path d="M920 75 H923 M932 75 H935" stroke="#c0c0c0" stroke-width="1"/><path d="M947 73 V66 H953 M950 63 L954 66 L950 69" stroke="#e0e0e0" stroke-width="2" fill="none"/><path d="M944 75 H947 M956 75 H959" stroke="#c0c0c0" stroke-width="1"/><rect x="966" y="60" width="1" height="17" fill="#2a2c2e"/><path d="M980 63 H993 M980 66 H993 M980 69 H990 M980 72 H988" stroke="#e0e0e0" stroke-width="1.6"/><path d="M990 74 H998 M995 71 L998 74 L995 77" stroke="#e0e0e0" stroke-width="1.6" fill="none"/><path d="M1001 63 H1014 M1007 63 V73 M1004 70 L1007 73 L1010 70 M1012 66 L1015 63" stroke="#e0e0e0" stroke-width="1.8" fill="none"/><path d="M1001 75 H1004 M1011 75 H1015" stroke="#c0c0c0"/><rect x="1018" y="61" width="2" height="2" fill="#cfc6ae"/><rect x="1018" y="65" width="2" height="2" fill="#cfc6ae"/><rect x="1018" y="69" width="2" height="2" fill="#cfc6ae"/><rect x="1018" y="73" width="2" height="2" fill="#cfc6ae"/><g transform="translate(1032.5,68.5)"><rect x="-1.6" y="-7" width="3.2" height="14" fill="#c0c0c0" transform="rotate(0)"/><rect x="-1.6" y="-7" width="3.2" height="14" fill="#c0c0c0" transform="rotate(45)"/><rect x="-1.6" y="-7" width="3.2" height="14" fill="#c0c0c0" transform="rotate(90)"/><rect x="-1.6" y="-7" width="3.2" height="14" fill="#c0c0c0" transform="rotate(135)"/><circle r="5" fill="#c0c0c0"/><circle r="1.90" fill="#4f5457"/></g><rect x="1046" y="61" width="2" height="2" fill="#cfc6ae"/><rect x="1046" y="65" width="2" height="2" fill="#cfc6ae"/><rect x="1046" y="69" width="2" height="2" fill="#cfc6ae"/><rect x="1046" y="73" width="2" height="2" fill="#cfc6ae"/><path d="M1055 66 Q1058 60 1064 62 M1056 70 Q1060 76 1066 73" stroke="#f0b828" stroke-width="2.5" fill="none"/><path d="M1054 60 L1069 76" stroke="#3050a0" stroke-width="1.5"/><path d="M1063 74 L1069 76" stroke="#20a040" stroke-width="2"/><rect x="1075" y="60" width="1" height="17" fill="#2a2c2e"/><g transform="translate(1093,68) scale(0.85)"><path d="M-7 -4 L-3 -1 M7 -4 L3 -1 M-7 2 L-3 1 M7 2 L3 1 M-5 7 L-2 3 M5 7 L2 3 M-3 -8 L-1 -4 M3 -8 L1 -4" stroke="#2aa078" stroke-width="1.2"/><ellipse cx="0" cy="1" rx="4.2" ry="5.2" fill="#9ad0a8" stroke="#1a7a9a" stroke-width="1.3"/><path d="M0 -3 V5" stroke="#d8f0d8" stroke-width="1"/></g><path d="M1108 66 H1115 L1111.5 70 Z" fill="#1e1e1e"/><circle cx="1129" cy="65" r="6" fill="#28a040" stroke="#1a7028"/><path d="M1127 62 L1132 65 L1127 68 Z" fill="#fff"/><rect x="1130" y="68" width="9" height="6" fill="#d82020"/><rect x="1133" y="66" width="3" height="2" fill="#d82020"/><path d="M1146 66 H1153 L1149.5 70 Z" fill="#1e1e1e"/><g transform="translate(0,1)"><rect x="2" y="91" width="2" height="2" fill="#cfc6ae"/><rect x="2" y="95" width="2" height="2" fill="#cfc6ae"/><rect x="2" y="99" width="2" height="2" fill="#cfc6ae"/><rect x="2" y="103" width="2" height="2" fill="#cfc6ae"/><rect x="11" y="91" width="6" height="12" fill="#e0e0e0" stroke="#a8a8a8" stroke-width="0.6"/><path d="M17 102 L21 98 M17 102 L21 106 M17 102 H26 V106" stroke="#e8e8e8" stroke-width="1.8" fill="none"/><path d="M33 96 H40 L36.5 100 Z" fill="#8a8d90"/><g transform="translate(54,96) scale(0.75)"><path d="M-7 -4 L-3 -1 M7 -4 L3 -1 M-7 2 L-3 1 M7 2 L3 1 M-5 7 L-2 3 M5 7 L2 3 M-3 -8 L-1 -4 M3 -8 L1 -4" stroke="#2aa078" stroke-width="1.2"/><ellipse cx="0" cy="1" rx="4.2" ry="5.2" fill="#9ad0a8" stroke="#1a7a9a" stroke-width="1.3"/><path d="M0 -3 V5" stroke="#d8f0d8" stroke-width="1"/></g><path d="M54 103 Q58 106 62 101 M60 99 L62 101 L59 104" stroke="#f0b020" stroke-width="2" fill="none"/><rect x="72" y="91" width="4" height="13" fill="#e0e0e0"/><path d="M78 91 L87 97.5 L78 104 Z" fill="#a8a8a8"/><path d="M94 96 H101 L97.5 100 Z" fill="#8a8d90"/><rect x="108" y="91" width="4" height="13" fill="#e8e8e8"/><rect x="114" y="91" width="4" height="13" fill="#e8e8e8"/><rect x="120" y="91" width="4" height="13" fill="#e8e8e8"/><circle cx="134" cy="92" r="2" fill="#c0c0c0"/><circle cx="134" cy="104" r="2" fill="#c0c0c0"/><path d="M134 92 V105 M134 99 L140 97" stroke="#c0c0c0" stroke-width="1.2"/><circle cx="141" cy="97" r="2" fill="#d0d0d0"/><path d="M143 93 L146 91" stroke="#e0e0e0"/><rect x="155.5" y="91.5" width="9" height="10" fill="#e8e8e8" stroke="#909090"/><rect x="159.5" y="95.5" width="10" height="11" fill="#f0f0f0" stroke="#909090"/><path d="M180 100 V105 H192 V100" stroke="#f0a818" stroke-width="2" fill="none"/><path d="M182 100 L180 97 L178 100" stroke="#f0a818" stroke-width="2" fill="none"/><path d="M187 91 L193 94.5 L187 98 Z" fill="#30a050"/><rect x="198" y="91" width="2" height="2" fill="#cfc6ae"/><rect x="198" y="95" width="2" height="2" fill="#cfc6ae"/><rect x="198" y="99" width="2" height="2" fill="#cfc6ae"/><rect x="198" y="103" width="2" height="2" fill="#cfc6ae"/><path d="M206 103 L213 96" stroke="#e8c070" stroke-width="2.5"/><circle cx="215" cy="96" r="5" fill="#e0e8f0" stroke="#7080a0"/><path d="M212 93 L218 99 M218 93 L212 99" stroke="#5060a0" stroke-width="0.8"/><rect x="226" y="91" width="2" height="2" fill="#cfc6ae"/><rect x="226" y="95" width="2" height="2" fill="#cfc6ae"/><rect x="226" y="99" width="2" height="2" fill="#cfc6ae"/><rect x="226" y="103" width="2" height="2" fill="#cfc6ae"/><rect x="236.5" y="91.5" width="12" height="14" fill="#b8d0f0" stroke="#7090c8"/><rect x="238" y="101" width="8" height="1.5" fill="#f0f0f0"/><circle cx="237" cy="93" r="3" fill="#fff"/><circle cx="237" cy="93" r="2" fill="none" stroke="#1a30e0" stroke-width="1.2"/><path d="M246 89 V95 M243 92 H249" stroke="#f0c020" stroke-width="1.6"/><rect x="254" y="91" width="2" height="2" fill="#cfc6ae"/><rect x="254" y="95" width="2" height="2" fill="#cfc6ae"/><rect x="254" y="99" width="2" height="2" fill="#cfc6ae"/><rect x="254" y="103" width="2" height="2" fill="#cfc6ae"/><path d="M263 104 L270 95 M268 104 L276 94 M264 99 L274 99" stroke="#e8b830" stroke-width="2" fill="none"/><rect x="282" y="91" width="2" height="2" fill="#cfc6ae"/><rect x="282" y="95" width="2" height="2" fill="#cfc6ae"/><rect x="282" y="99" width="2" height="2" fill="#cfc6ae"/><rect x="282" y="103" width="2" height="2" fill="#cfc6ae"/><rect x="291.5" y="94.5" width="14" height="11" fill="#4a80d0" stroke="#2050a0"/><rect x="291" y="94" width="15" height="3" fill="#80b0e8"/><text x="294" y="104.5" font-size="9" font-weight="bold" fill="#fff" font-family="Liberation Sans">C</text><path d="M302 89 V95 M299 92 H305" stroke="#f0c020" stroke-width="1.6"/><path d="M313 96 H320 L316.5 100 Z" fill="#1e1e1e"/><path d="M329.5 94.5 H335 L336 93 H342 V105.5 H329.5 Z" fill="#f5d580" stroke="#c8952e"/><rect x="329" y="99" width="7" height="7" fill="#6d8ee8"/><path d="M340 89 V95 M337 92 H343" stroke="#f0c020" stroke-width="1.6"/><path d="M350 96 H357 L353.5 100 Z" fill="#1e1e1e"/><rect x="367.5" y="92.5" width="11" height="14" fill="#f0f4fa" stroke="#a0a8b8"/><text x="369" y="104" font-size="10" font-weight="bold" fill="#2040c0" font-family="Liberation Sans">C</text><path d="M377 89 V95 M374 92 H380" stroke="#f0c020" stroke-width="1.6"/><path d="M389 96 H396 L392.5 100 Z" fill="#1e1e1e"/><circle cx="411" cy="99" r="7" fill="#30a050" stroke="#1a7030"/><text x="406.5" y="103.5" font-size="10" font-weight="bold" fill="#fff" font-family="Liberation Sans">C</text><path d="M415 89 V95 M412 92 H418" stroke="#f0c020" stroke-width="1.6"/><path d="M429 96 H436 L432.5 100 Z" fill="#1e1e1e"/><rect x="439" y="91" width="2" height="2" fill="#cfc6ae"/><rect x="439" y="95" width="2" height="2" fill="#cfc6ae"/><rect x="439" y="99" width="2" height="2" fill="#cfc6ae"/><rect x="439" y="103" width="2" height="2" fill="#cfc6ae"/><path d="M446.5 97.5 H451 L452 96 H458 V105.5 H446.5 Z" fill="#f5d580" stroke="#c8952e"/><path d="M447 105.5 L450 100.5 H462 L459 105.5 Z" fill="#f5d17a" stroke="#c8952e"/><circle cx="453" cy="94" r="3" fill="#8a60c0"/><circle cx="459" cy="96" r="3" fill="#30a050"/><path d="M472 104 L483 93" stroke="#f0e0b0" stroke-width="5" stroke-linecap="round"/><path d="M476 100 L479 97" stroke="#a89070" stroke-width="5"/><path d="M470 106 L473 103" stroke="#f8f0c0" stroke-width="3"/><path d="M495 96 H502 L498.5 100 Z" fill="#1e1e1e"/><rect x="505" y="91" width="2" height="2" fill="#cfc6ae"/><rect x="505" y="95" width="2" height="2" fill="#cfc6ae"/><rect x="505" y="99" width="2" height="2" fill="#cfc6ae"/><rect x="505" y="103" width="2" height="2" fill="#cfc6ae"/><path d="M512 105 L528 92 V105 Z" fill="#d0d0d0"/><path d="M512 105 L528 92" stroke="#f0f0f0" stroke-width="1.2"/><rect x="535.5" y="91.5" width="10" height="13" fill="#e8e8e8" stroke="#909090"/><path d="M538 95 H543 M538 98 H543" stroke="#808080"/><path d="M549 95 V101 H543 M545 99 L543 101 L545 103" stroke="#e8e8e8" stroke-width="1.8" fill="none"/><rect x="558.5" y="91.5" width="14" height="14" fill="#d8d8d8" stroke="#a0a0a0"/><path d="M561 95 H570 M561 98 H570 M561 101 H570" stroke="#808080"/><path d="M586 91.5 H593 M587.5 92 V104 M590.5 92 V104" stroke="#c8c8c8" stroke-width="1.6"/><circle cx="586.5" cy="95" r="3" fill="#c8c8c8"/><rect x="602" y="91" width="2" height="2" fill="#cfc6ae"/><rect x="602" y="95" width="2" height="2" fill="#cfc6ae"/><rect x="602" y="99" width="2" height="2" fill="#cfc6ae"/><rect x="602" y="103" width="2" height="2" fill="#cfc6ae"/><rect x="614.5" y="93.5" width="10" height="12" fill="#e0e0e0" stroke="#909090"/><path d="M616 97 H623 M616 100 H623" stroke="#808080"/><path d="M617 90 V100 M613 96 L617 101 L621 96" stroke="#e8e8e8" stroke-width="2" fill="none"/><path d="M634 96 H641 L637.5 100 Z" fill="#8a8d90"/><rect x="652.5" y="91.5" width="11" height="12" fill="#e0e0e0" stroke="#909090"/><path d="M655 95 H662 M655 98 H662" stroke="#808080"/><path d="M653 106 V96 M649 100 L653 95 L657 100" stroke="#f0f0f0" stroke-width="2.2" fill="none"/><path d="M671 96 H678 L674.5 100 Z" fill="#8a8d90"/><path d="M700 96 H692 V92 L686 98.5 L692 105 V101 H700 Z" fill="#f5d040" stroke="#a87818" stroke-width="0.8"/><circle cx="687" cy="92" r="2.5" fill="#3a70c8"/><path d="M709 96 H717 V92 L723 98.5 L717 105 V101 H709 Z" fill="#f5d040" stroke="#a87818" stroke-width="0.8"/><circle cx="722" cy="92" r="2.5" fill="#3a70c8"/><path d="M747 96 H739 V92 L733 98.5 L739 105 V101 H747 Z" fill="#f5d040" stroke="#a87818" stroke-width="0.8"/><path d="M753 96 H760 L756.5 100 Z" fill="#1e1e1e"/><path d="M770 96 H779 V92 L785 98.5 L779 105 V101 H770 Z" fill="#f0f0f0" stroke="#b0b0b0" stroke-width="0.8"/><path d="M793 96 H800 L796.5 100 Z" fill="#8a8d90"/><rect x="807" y="89" width="1" height="19" fill="#2a2c2e"/><rect x="815.5" y="93.5" width="14" height="12" fill="#eaf2fb" stroke="#c8a048"/><rect x="816" y="94" width="13" height="2.5" fill="#4a90d8"/><circle cx="827" cy="92" r="3" fill="#30a040"/><path d="M823 99 L826 94" stroke="#308040" stroke-width="1.2"/><circle cx="883" cy="97" r="4.5" fill="none" stroke="#8a8d90" stroke-width="2"/><path d="M886 100 L891 105" stroke="#8a8d90" stroke-width="2.5"/><rect x="909" y="91" width="2" height="2" fill="#cfc6ae"/><rect x="909" y="95" width="2" height="2" fill="#cfc6ae"/><rect x="909" y="99" width="2" height="2" fill="#cfc6ae"/><rect x="909" y="103" width="2" height="2" fill="#cfc6ae"/><rect x="918.5" y="92.5" width="14" height="12" fill="#eaf2fb" stroke="#c8a048"/><rect x="919" y="93" width="13" height="2.5" fill="#4a90d8"/><path d="M929 89 V95 M926 92 H932" stroke="#f0c020" stroke-width="1.6"/><rect x="940" y="89" width="1" height="19" fill="#2a2c2e"/><rect x="950.5" y="91.5" width="11" height="11" fill="#f0f0f0" stroke="#606878"/><rect x="951" y="92" width="10" height="2" fill="#5080c0"/><rect x="955.5" y="96.5" width="10" height="10" fill="#f8f8f8" stroke="#606878"/><text x="957" y="105" font-size="8" font-weight="bold" fill="#204080" font-family="Liberation Sans">C</text><rect x="1018.5" y="91.5" width="11" height="14" fill="#b8d0f0" stroke="#7090c8"/><rect x="1021" y="93" width="7" height="6" fill="#fff"/><path d="M1022 93 V99 M1024 93 V99 M1026 93 V99 M1021 95 H1028 M1021 97 H1028" stroke="#4050d0" stroke-width="0.7"/><circle cx="1018" cy="93" r="3" fill="#fff"/><circle cx="1018" cy="93" r="2" fill="none" stroke="#1a30e0" stroke-width="1.2"/><g transform="translate(1101,98) scale(0.75)"><path d="M-7 -4 L-3 -1 M7 -4 L3 -1 M-7 2 L-3 1 M7 2 L3 1 M-5 7 L-2 3 M5 7 L2 3 M-3 -8 L-1 -4 M3 -8 L1 -4" stroke="#2aa078" stroke-width="1.2"/><ellipse cx="0" cy="1" rx="4.2" ry="5.2" fill="#9ad0a8" stroke="#1a7a9a" stroke-width="1.3"/><path d="M0 -3 V5" stroke="#d8f0d8" stroke-width="1"/></g><rect x="1161" y="91" width="5" height="5" fill="#c87838" stroke="#8a4a18" stroke-width="0.6"/><rect x="1166" y="96" width="5" height="5" fill="#c87838" stroke="#8a4a18" stroke-width="0.6"/><rect x="1171" y="101" width="5" height="5" fill="#c87838" stroke="#8a4a18" stroke-width="0.6"/><rect x="1161" y="97" width="5" height="5" fill="#c87838" stroke="#8a4a18" stroke-width="0.6"/><rect x="1167" y="102" width="5" height="5" fill="#c87838" stroke="#8a4a18" stroke-width="0.6"/></g><rect x="1240" y="114" width="2" height="2" fill="#b8b8b8"/><rect x="1244" y="114" width="2" height="2" fill="#b8b8b8"/><rect x="1248" y="114" width="2" height="2" fill="#b8b8b8"/><rect x="1252" y="114" width="2" height="2" fill="#b8b8b8"/><rect x="1242.5" y="128.5" width="7" height="5" fill="none" stroke="#6a6460"/><rect x="1245.5" y="125.5" width="7" height="5" fill="none" stroke="#6a6460"/><rect x="1240.5" y="145.5" width="11" height="11" fill="#f4f8fc" stroke="#a88848"/><rect x="1241" y="146" width="10" height="2" fill="#4a90d8"/><rect x="1243" y="148" width="1" height="8" fill="#a88848"/><rect x="6.5" y="118.5" width="9" height="11" fill="#e8eef8" stroke="#8090a8"/><path d="M8 121 H14 M8 123 H14 M8 125 H12" stroke="#5070b0" stroke-width="0.8"/><path d="M11.5 127.5 H14 L15 126 H20.5 V133.5 H11.5 Z" fill="#f5d580" stroke="#c8952e"/><rect x="183.5" y="118.5" width="11" height="11" fill="#f0f0f0" stroke="#606878"/><rect x="184" y="119" width="10" height="2" fill="#5080c0"/><rect x="187.5" y="123.5" width="10" height="10" fill="#f8f8f8" stroke="#606878"/><text x="189" y="132" font-size="8" font-weight="bold" fill="#204080" font-family="Liberation Sans">C</text><rect x="326.5" y="120.5" width="10" height="10" fill="#a8c8e8" stroke="#7090b0"/><rect x="328.5" y="122.5" width="10" height="10" fill="#e0ecf8" stroke="#7090b0"/><rect x="331" y="127" width="6" height="1.5" fill="#1a4080"/><path d="M362 124 H350 M353 121 L350 124 L353 127 M348 130 H360 M357 127 L360 130 L357 133" stroke="#e8a830" stroke-width="1.8" fill="none"/><path d="M371 120 H384 L379 126 V134 L376 132 V126 Z" fill="#c8e0f8" stroke="#90b0d0" stroke-width="0.8"/><circle cx="401" cy="122" r="1.5" fill="#f0f0f0"/><circle cx="401" cy="127" r="1.5" fill="#f0f0f0"/><circle cx="401" cy="132" r="1.5" fill="#f0f0f0"/><rect x="419.5" y="121.5" width="10" height="3" fill="none" stroke="#c8c8c8"/><rect x="442.5" y="121.5" width="10" height="10" fill="none" stroke="#c8c8c8"/><rect x="443" y="123" width="9" height="1" fill="#c8c8c8"/><rect x="473.5" y="119.5" width="10" height="13" fill="#f0f4fa" stroke="#90a0b8"/><circle cx="477" cy="122" r="2.5" fill="#e02020"/><path d="M474 134 L477 128 L480 134 Z" fill="#f0c040"/><rect x="528.5" y="120.5" width="12" height="10" fill="#e8f0fa" stroke="#3a6ab8"/><rect x="530" y="122" width="9" height="1.5" fill="#3a6ab8"/><rect x="529" y="131" width="11" height="2" fill="#3a6ab8"/><circle cx="602" cy="126" r="6" fill="#5aa0e0" stroke="#a0c8f0"/><path d="M598 124 Q602 121 606 125" stroke="#60b060" stroke-width="2" fill="none"/><path d="M604 131 L611 124" stroke="#e8c040" stroke-width="2.5"/><rect x="669.5" y="119.5" width="6" height="10" fill="#f0f0f0" stroke="#8090a8"/><rect x="675.5" y="119.5" width="6" height="10" fill="#f0f0f0" stroke="#8090a8"/><path d="M677 132 L684 125" stroke="#e8c040" stroke-width="2.5"/><rect x="743.5" y="119.5" width="13" height="14" fill="#b8d0f0" stroke="#7090c8"/><rect x="747" y="121" width="8" height="6" fill="#fff"/><path d="M748 121 V127 M750 121 V127 M752 121 V127 M754 121 V127 M747 123 H755 M747 125 H755" stroke="#4050d0" stroke-width="0.7"/><rect x="750" y="129" width="5" height="3" fill="#1a7a2a"/><path d="M741 134 L746 129" stroke="#d0d0d0" stroke-width="2"/><circle cx="744" cy="122" r="3" fill="#fff"/><circle cx="744" cy="122" r="2" fill="none" stroke="#1a30e0" stroke-width="1.1"/><rect x="897.5" y="119.5" width="13" height="14" fill="#b8d0f0" stroke="#7090c8"/><rect x="901" y="121" width="8" height="6" fill="#fff"/><path d="M902 121 V127 M904 121 V127 M906 121 V127 M908 121 V127 M901 123 H909 M901 125 H909" stroke="#4050d0" stroke-width="0.7"/><rect x="904" y="129" width="5" height="3" fill="#1a7a2a"/><path d="M895 134 L900 129" stroke="#d0d0d0" stroke-width="2"/><circle cx="898" cy="122" r="3" fill="#fff"/><circle cx="898" cy="122" r="2" fill="none" stroke="#1a30e0" stroke-width="1.1"/><rect x="971.5" y="119.5" width="13" height="14" fill="#b8d0f0" stroke="#7090c8"/><rect x="975" y="121" width="8" height="6" fill="#fff"/><path d="M976 121 V127 M978 121 V127 M980 121 V127 M982 121 V127 M975 123 H983 M975 125 H983" stroke="#4050d0" stroke-width="0.7"/><rect x="978" y="129" width="5" height="3" fill="#1a7a2a"/><path d="M969 134 L974 129" stroke="#d0d0d0" stroke-width="2"/><circle cx="972" cy="122" r="3" fill="#fff"/><circle cx="972" cy="122" r="2" fill="none" stroke="#1a30e0" stroke-width="1.1"/><g transform="translate(836,126) scale(0.75)"><path d="M-7 -4 L-3 -1 M7 -4 L3 -1 M-7 2 L-3 1 M7 2 L3 1 M-5 7 L-2 3 M5 7 L2 3 M-3 -8 L-1 -4 M3 -8 L1 -4" stroke="#2aa078" stroke-width="1.2"/><ellipse cx="0" cy="1" rx="4.2" ry="5.2" fill="#9ad0a8" stroke="#1a7a9a" stroke-width="1.3"/><path d="M0 -3 V5" stroke="#d8f0d8" stroke-width="1"/></g><rect x="1045.5" y="119.5" width="10" height="10" fill="#f0f0f0" stroke="#8090a8"/><path d="M1048 130 L1057 120" stroke="#f08020" stroke-width="2.2"/><circle cx="1046" cy="132" r="2.5" fill="none" stroke="#e0e0e0" stroke-width="1.2"/><circle cx="1052" cy="132" r="2.5" fill="none" stroke="#e0e0e0" stroke-width="1.2"/><rect x="1117" y="119" width="7" height="14" rx="3" fill="#5a90d8" stroke="#3060b0"/><rect x="1119" y="121" width="2" height="10" fill="#c0d8f8"/><rect x="1190.5" y="121.5" width="10" height="3" fill="none" stroke="#c8c8c8"/><rect x="1213.5" y="120.5" width="11" height="10" fill="none" stroke="#c8c8c8"/><rect x="1214" y="123" width="10" height="1" fill="#c8c8c8"/><rect x="1092.5" y="142.5" width="12" height="14" fill="#b8d0f0" stroke="#7090c8"/><circle cx="1092" cy="143" r="3" fill="#fff"/><circle cx="1092" cy="143" r="2" fill="none" stroke="#1a30e0" stroke-width="1.1"/><circle cx="1098" cy="152" r="5" fill="#30a040" stroke="#e0f0e0"/><path d="M1096.5 149 L1101 152 L1096.5 155 Z" fill="#fff"/><path d="M1193.5 141.5 H1203 L1207.5 146 V158.5 H1193.5 Z" fill="#f0f4fa" stroke="#8090c0"/><rect x="1194" y="152" width="13" height="6" fill="#f0b040"/><circle cx="1196" cy="150" r="5" fill="#3a80e0" stroke="#a0c8f8"/><circle cx="1222" cy="144" r="1.6" fill="#f0f0f0"/><circle cx="1222" cy="150" r="1.6" fill="#f0f0f0"/><circle cx="1222" cy="156" r="1.6" fill="#f0f0f0"/><path d="M116 1041 H124 V1037 L132 1044 L124 1051 V1047 H116 Z" fill="#f8c020"/><circle cx="309.5" cy="1043.5" r="6.5" fill="#f4f4f4" stroke="#202020" stroke-width="1.5"/><path d="M306 1047 L312 1040" stroke="#d02020" stroke-width="1.2"/><rect x="308" y="1035" width="3" height="2" fill="#d02020"/><circle cx="459" cy="1043.5" r="7" fill="#2a88e8" stroke="#80c0f8"/><rect x="458" y="1042" width="2.4" height="6" fill="#fff"/><circle cx="459.2" cy="1039.5" r="1.3" fill="#fff"/><rect x="2" y="1063" width="2" height="2" fill="#d8d0c0"/><rect x="2" y="1067" width="2" height="2" fill="#d8d0c0"/><rect x="2" y="1071" width="2" height="2" fill="#d8d0c0"/><rect x="2" y="1075" width="2" height="2" fill="#d8d0c0"/></svg>
<div class="t" style="left:30px;top:10.02px;font-size:12.5px;line-height:12.5px;color:#ffffff;font-family:'Liberation Sans',sans-serif;letter-spacing:-0.475px">RL78 - RL78G13_ondo_shitudo_20221213/src/r_main.c - e</div>
<div class="t" style="left:334.5px;top:8.83px;font-size:8px;line-height:8px;color:#ffffff;font-family:'Liberation Sans',sans-serif;">2</div>
<div class="t" style="left:341.6px;top:10.02px;font-size:12.5px;line-height:12.5px;color:#ffffff;font-family:'Liberation Sans',sans-serif;letter-spacing:-0.160px">studio</div>
<div class="t" style="left:8px;top:34.44px;font-size:12px;line-height:12px;color:#e8e8e8;font-family:'Liberation Sans',sans-serif;"><span style="display:inline-block;width:31.67px;vertical-align:top;overflow:visible"><span style="display:inline-block;transform-origin:0 0;transform:scaleX(0.6598)">ファイル</span></span>(F)</div>
<div class="t" style="left:77px;top:34.44px;font-size:12px;line-height:12px;color:#e8e8e8;font-family:'Liberation Sans',sans-serif;"><span style="display:inline-block;width:21.00px;vertical-align:top;overflow:visible"><span style="display:inline-block;transform-origin:0 0;transform:scaleX(0.8750)">編集</span></span>(E)</div>
<div class="t" style="left:135px;top:34.44px;font-size:12px;line-height:12px;color:#e8e8e8;font-family:'Liberation Sans',sans-serif;"><span style="display:inline-block;width:24.00px;vertical-align:top;overflow:visible"><span style="display:inline-block;transform-origin:0 0;transform:scaleX(0.6667)">ソース</span></span>(S)</div>
<div class="t" style="left:196px;top:34.44px;font-size:12px;line-height:12px;color:#e8e8e8;font-family:'Liberation Sans',sans-serif;"><span style="display:inline-block;width:65.67px;vertical-align:top;overflow:visible"><span style="display:inline-block;transform-origin:0 0;transform:scaleX(0.6841)">リファクタリング</span></span>(T)</div>
<div class="t" style="left:298px;top:34.44px;font-size:12px;line-height:12px;color:#e8e8e8;font-family:'Liberation Sans',sans-serif;"><span style="display:inline-block;width:42.33px;vertical-align:top;overflow:visible"><span style="display:inline-block;transform-origin:0 0;transform:scaleX(0.7055)">ナビゲート</span></span>(N)</div>
<div class="t" style="left:379px;top:34.44px;font-size:12px;line-height:12px;color:#e8e8e8;font-family:'Liberation Sans',sans-serif;"><span style="display:inline-block;width:23.00px;vertical-align:top;overflow:visible"><span style="display:inline-block;transform-origin:0 0;transform:scaleX(0.9583)">検索</span></span>(A)</div>
<div class="t" style="left:440px;top:34.44px;font-size:12px;line-height:12px;color:#e8e8e8;font-family:'Liberation Sans',sans-serif;"><span style="display:inline-block;width:50.00px;vertical-align:top;overflow:visible"><span style="display:inline-block;transform-origin:0 0;transform:scaleX(0.6944)">プロジェクト</span></span>(P)</div>
<div class="t" style="left:528px;top:34.44px;font-size:12px;line-height:12px;color:#e8e8e8;font-family:'Liberation Sans',sans-serif;letter-spacing:-0.577px">Renesas Views</div>
<div class="t" style="left:624px;top:34.44px;font-size:12px;line-height:12px;color:#e8e8e8;font-family:'Liberation Sans',sans-serif;"><span style="display:inline-block;width:21.33px;vertical-align:top;overflow:visible"><span style="display:inline-block;transform-origin:0 0;transform:scaleX(0.8887)">実行</span></span>(R)</div>
<div class="t" style="left:684px;top:34.44px;font-size:12px;line-height:12px;color:#e8e8e8;font-family:'Liberation Sans',sans-serif;"><span style="display:inline-block;width:40.67px;vertical-align:top;overflow:visible"><span style="display:inline-block;transform-origin:0 0;transform:scaleX(0.6779)">ウィンドウ</span></span>(W)</div>
<div class="t" style="left:766px;top:34.44px;font-size:12px;line-height:12px;color:#e8e8e8;font-family:'Liberation Sans',sans-serif;"><span style="display:inline-block;width:28.33px;vertical-align:top;overflow:visible"><span style="display:inline-block;transform-origin:0 0;transform:scaleX(0.7869)">ヘルプ</span></span>(H)</div>
<div class="t" style="left:151px;top:61.02px;font-size:12.5px;line-height:12.5px;color:#f4f4f4;font-family:'Liberation Sans',sans-serif;"><span style="display:inline-block;width:34.33px;vertical-align:top;overflow:visible"><span style="display:inline-block;transform-origin:0 0;transform:scaleX(0.6602)">デバッグ</span></span>(B)</div>
<div class="t" style="left:306px;top:62.44px;font-size:12px;line-height:12px;color:#f4f4f4;font-family:'Liberation Sans',sans-serif;letter-spacing:-0.489px">RL78G13_ondo_shitudo_20221213</div>
<div class="t" style="left:25px;top:121.44px;font-size:12px;line-height:12px;color:#ffffff;font-family:'Liberation Sans',sans-serif;"><span style="display:inline-block;width:128.00px;vertical-align:top;overflow:visible"><span style="display:inline-block;transform-origin:0 0;transform:scaleX(0.7111)">プロジェクト・エクスプローラー</span></span></div>
<div class="t" style="left:201px;top:121.44px;font-size:12px;line-height:12px;color:#c8c8c8;font-family:'Liberation Sans',sans-serif;letter-spacing:0.062px">C/C++</div>
<div class="t" style="left:240px;top:121.44px;font-size:12px;line-height:12px;color:#c8c8c8;font-family:'Liberation Sans',sans-serif;"><span style="display:inline-block;width:52.00px;vertical-align:top;overflow:visible"><span style="display:inline-block;transform-origin:0 0;transform:scaleX(0.7222)">プロジェクト</span></span></div>
<div class="t" style="left:492px;top:121.44px;font-size:12px;line-height:12px;color:#d8d8d8;font-family:'Liberation Sans',sans-serif;"><span style="display:inline-block;width:23.00px;vertical-align:top;overflow:visible"><span style="display:inline-block;transform-origin:0 0;transform:scaleX(0.9583)">問題</span></span></div>
<div class="t" style="left:544px;top:121.44px;font-size:12px;line-height:12px;color:#d8d8d8;font-family:'Liberation Sans',sans-serif;"><span style="display:inline-block;width:25.98px;vertical-align:top;overflow:visible"><span style="display:inline-block;transform-origin:0 0;transform:scaleX(0.7218)">コンソ</span></span>...</div>
<div class="t" style="left:615px;top:121.44px;font-size:12px;line-height:12px;color:#d8d8d8;font-family:'Liberation Sans',sans-serif;"><span style="display:inline-block;width:24.98px;vertical-align:top;overflow:visible"><span style="display:inline-block;transform-origin:0 0;transform:scaleX(0.6940)">スマー</span></span>...</div>
<div class="t" style="left:687px;top:121.44px;font-size:12px;line-height:12px;color:#d8d8d8;font-family:'Liberation Sans',sans-serif;"><span style="display:inline-block;width:24.98px;vertical-align:top;overflow:visible"><span style="display:inline-block;transform-origin:0 0;transform:scaleX(0.6940)">スマー</span></span>...</div>
<div class="t" style="left:760px;top:121.44px;font-size:12px;line-height:12px;color:#ffffff;font-family:'Liberation Sans',sans-serif;">*<span style="display:inline-block;width:22.31px;vertical-align:top;overflow:visible"><span style="display:inline-block;transform-origin:0 0;transform:scaleX(0.9297)">周辺</span></span>...</div>
<div class="t" style="left:848px;top:121.44px;font-size:12px;line-height:12px;color:#d8d8d8;font-family:'Liberation Sans',sans-serif;"><span style="display:inline-block;width:36.00px;vertical-align:top;overflow:visible"><span style="display:inline-block;transform-origin:0 0;transform:scaleX(0.7500)">デバッグ</span></span></div>
<div class="t" style="left:914px;top:121.44px;font-size:12px;line-height:12px;color:#d8d8d8;font-family:'Liberation Sans',sans-serif;"><span style="display:inline-block;width:33.98px;vertical-align:top;overflow:visible"><span style="display:inline-block;transform-origin:0 0;transform:scaleX(0.9440)">端子配</span></span>...</div>
<div class="t" style="left:988px;top:121.44px;font-size:12px;line-height:12px;color:#d8d8d8;font-family:'Liberation Sans',sans-serif;"><span style="display:inline-block;width:33.98px;vertical-align:top;overflow:visible"><span style="display:inline-block;transform-origin:0 0;transform:scaleX(0.9440)">端子配</span></span>...</div>
<div class="t" style="left:1062px;top:121.44px;font-size:12px;line-height:12px;color:#d8d8d8;font-family:'Liberation Sans',sans-serif;"><span style="display:inline-block;width:27.98px;vertical-align:top;overflow:visible"><span style="display:inline-block;transform-origin:0 0;transform:scaleX(0.5830)">コード・</span></span>...</div>
<div class="t" style="left:1131px;top:121.44px;font-size:12px;line-height:12px;color:#d8d8d8;font-family:'Liberation Sans',sans-serif;"><span style="display:inline-block;width:34.00px;vertical-align:top;overflow:visible"><span style="display:inline-block;transform-origin:0 0;transform:scaleX(0.7083)">メモリー</span></span></div>
<div class="t" style="left:1109px;top:144.44px;font-size:12px;line-height:12px;color:#e8e8e8;font-family:'Liberation Sans',sans-serif;"><span style="display:inline-block;width:70.00px;vertical-align:top;overflow:visible"><span style="display:inline-block;transform-origin:0 0;transform:scaleX(0.7292)">コードを生成する</span></span></div>
<div class="t" style="left:475px;top:167.02px;font-size:12.5px;line-height:12.5px;color:#000000;font-family:'Liberation Sans',sans-serif;letter-spacing:-0.664px">SAU0</div>
<div class="t" style="left:517px;top:167.02px;font-size:12.5px;line-height:12.5px;color:#000000;font-family:'Liberation Sans',sans-serif;letter-spacing:-0.664px">SAU1</div>
<div class="t" style="left:559px;top:165.02px;font-size:12.5px;line-height:12.5px;color:#000000;font-family:'Liberation Sans',sans-serif;letter-spacing:-0.253px">IICA0</div>
<div class="t" style="left:477px;top:189.44px;font-size:12px;line-height:12px;color:#000000;font-family:'Liberation Sans',sans-serif;"><span style="display:inline-block;width:54.00px;vertical-align:top;overflow:visible"><span style="display:inline-block;transform-origin:0 0;transform:scaleX(0.9000)">転送モード</span></span></div>
<div class="t" style="left:544px;top:191.44px;font-size:12px;line-height:12px;color:#000000;font-family:'Liberation Sans',sans-serif;"><span style="display:inline-block;width:25.00px;vertical-align:top;overflow:visible"><span style="display:inline-block;transform-origin:0 0;transform:scaleX(1.0417)">設定</span></span></div>
<div class="t" style="left:512px;top:230.44px;font-size:12px;line-height:12px;color:#000000;font-family:'Liberation Sans',sans-serif;"><span style="display:inline-block;width:53.00px;vertical-align:top;overflow:visible"><span style="display:inline-block;transform-origin:0 0;transform:scaleX(0.8833)">使用しない</span></span></div>
<div class="t" style="left:512px;top:252.44px;font-size:12px;line-height:12px;color:#000000;font-family:'Liberation Sans',sans-serif;"><span style="display:inline-block;width:64.00px;vertical-align:top;overflow:visible"><span style="display:inline-block;transform-origin:0 0;transform:scaleX(0.7619)">シングルマスタ</span></span></div>
<div class="t" style="left:512px;top:274.44px;font-size:12px;line-height:12px;color:#000000;font-family:'Liberation Sans',sans-serif;"><span style="display:inline-block;width:36.00px;vertical-align:top;overflow:visible"><span style="display:inline-block;transform-origin:0 0;transform:scaleX(0.7500)">スレーブ</span></span></div>
<div class="t" style="left:598px;top:356.90px;font-size:15px;line-height:15px;color:#e0102a;font-family:'Liberation Sans',sans-serif;font-weight:normal;-webkit-text-stroke:0.5px #e0102a"><span style="display:inline-block;width:195.00px;vertical-align:top;overflow:visible"><span style="display:inline-block;transform-origin:0 0;transform:scaleX(0.9286)">シングルマスタをチェックする</span></span></div>
<div class="t" style="left:20px;top:1039.02px;font-size:12.5px;line-height:12.5px;color:#ffffff;font-family:'Liberation Sans',sans-serif;"><span style="display:inline-block;width:34.00px;vertical-align:top;overflow:visible"><span style="display:inline-block;transform-origin:0 0;transform:scaleX(0.8718)">実行中</span></span></div>
<div class="t" style="left:943px;top:1038.44px;font-size:12px;line-height:12px;color:#e0e0e0;font-family:'Liberation Sans',sans-serif;">RL78G13_ondo_shitudo...1213/<span style="display:inline-block;width:48.91px;vertical-align:top;overflow:visible"><span style="display:inline-block;transform-origin:0 0;transform:scaleX(0.8152)">コード生成</span></span>/<span style="display:inline-block;width:39.13px;vertical-align:top;overflow:visible"><span style="display:inline-block;transform-origin:0 0;transform:scaleX(0.8152)">周辺機能</span></span>/<span style="display:inline-block;width:39.13px;vertical-align:top;overflow:visible"><span style="display:inline-block;transform-origin:0 0;transform:scaleX(0.8152)">シリアル</span></span></div>
<div class="t" style="left:42.5px;top:142.44px;font-size:12px;line-height:12px;color:#bababa;font-family:'Liberation Sans',sans-serif;letter-spacing:-0.658px">RL78G10Y16_CCRL_ondoshitudo_20221204</div>
<div class="t" style="left:42.5px;top:160.44px;font-size:12px;line-height:12px;color:#bababa;font-family:'Liberation Sans',sans-serif;letter-spacing:-0.560px">RL78G10Y16_PWMpowerpack20220803</div>
<div class="t" style="left:42.5px;top:178.44px;font-size:12px;line-height:12px;color:#bababa;font-family:'Liberation Sans',sans-serif;letter-spacing:-0.876px">RL78G10Y16_RCServo_20220526</div>
<div class="t" style="left:42.5px;top:196.44px;font-size:12px;line-height:12px;color:#bababa;font-family:'Liberation Sans',sans-serif;letter-spacing:-0.816px">RL78G10Y16_test_20220522_01</div>
<div class="t" style="left:42.5px;top:214.44px;font-size:12px;line-height:12px;color:#bababa;font-family:'Liberation Sans',sans-serif;letter-spacing:-0.934px">RL78G10Y47_IIC_S5851_20230106_01</div>
<div class="t" style="left:42.5px;top:232.44px;font-size:12px;line-height:12px;color:#bababa;font-family:'Liberation Sans',sans-serif;letter-spacing:-0.816px">RL78G10Y47_test_20220513_01</div>
<div class="t" style="left:42.5px;top:250.44px;font-size:12px;line-height:12px;color:#bababa;font-family:'Liberation Sans',sans-serif;letter-spacing:-0.838px">RL78G13_ADC_test_02</div>
<div class="t" style="left:42.5px;top:268.44px;font-size:12px;line-height:12px;color:#bababa;font-family:'Liberation Sans',sans-serif;letter-spacing:-0.474px">RL78G13_AQM1602_AM2320_ondo_shitudo_20230112</div>
<div class="t" style="left:42.5px;top:286.44px;font-size:12px;line-height:12px;color:#bababa;font-family:'Liberation Sans',sans-serif;letter-spacing:-0.506px">RL78G13_ondo_shitudo_20221213</div>
<div class="t" style="left:58.5px;top:304.44px;font-size:12px;line-height:12px;color:#bababa;font-family:'Liberation Sans',sans-serif;"><span style="display:inline-block;width:43.20px;vertical-align:top;overflow:visible"><span style="display:inline-block;transform-origin:0 0;transform:scaleX(0.7200)">バイナリー</span></span></div>
<div class="t" style="left:58.5px;top:322.44px;font-size:12px;line-height:12px;color:#bababa;font-family:'Liberation Sans',sans-serif;letter-spacing:-0.188px">Includes</div>
<div class="t" style="left:58.5px;top:340.44px;font-size:12px;line-height:12px;color:#bababa;font-family:'Liberation Sans',sans-serif;letter-spacing:-0.234px">generate</div>
<div class="t" style="left:58.5px;top:358.44px;font-size:12px;line-height:12px;color:#bababa;font-family:'Liberation Sans',sans-serif;letter-spacing:-0.767px">src</div>
<div class="t" style="left:74.5px;top:376.44px;font-size:12px;line-height:12px;color:#bababa;font-family:'Liberation Sans',sans-serif;letter-spacing:-0.526px">r_cg_cgc_user.c</div>
<div class="t" style="left:74.5px;top:394.44px;font-size:12px;line-height:12px;color:#bababa;font-family:'Liberation Sans',sans-serif;letter-spacing:-0.453px">r_cg_cgc.c</div>
<div class="t" style="left:74.5px;top:412.44px;font-size:12px;line-height:12px;color:#bababa;font-family:'Liberation Sans',sans-serif;letter-spacing:-0.370px">r_cg_cgc.h</div>
<div class="t" style="left:74.5px;top:430.44px;font-size:12px;line-height:12px;color:#bababa;font-family:'Liberation Sans',sans-serif;letter-spacing:-0.195px">r_cg_interrupt_handlers.h</div>
<div class="t" style="left:74.5px;top:448.44px;font-size:12px;line-height:12px;color:#bababa;font-family:'Liberation Sans',sans-serif;letter-spacing:-0.262px">r_cg_macrodriver.h</div>
<div class="t" style="left:74.5px;top:466.44px;font-size:12px;line-height:12px;color:#bababa;font-family:'Liberation Sans',sans-serif;letter-spacing:-0.431px">r_cg_port_user.c</div>
<div class="t" style="left:74.5px;top:484.44px;font-size:12px;line-height:12px;color:#bababa;font-family:'Liberation Sans',sans-serif;letter-spacing:-0.303px">r_cg_port.c</div>
<div class="t" style="left:74.5px;top:502.44px;font-size:12px;line-height:12px;color:#bababa;font-family:'Liberation Sans',sans-serif;letter-spacing:-0.237px">r_cg_port.h</div>
<div class="t" style="left:74.5px;top:520.44px;font-size:12px;line-height:12px;color:#bababa;font-family:'Liberation Sans',sans-serif;letter-spacing:-0.516px">r_cg_rtc_user.c</div>
<div class="t" style="left:74.5px;top:538.44px;font-size:12px;line-height:12px;color:#bababa;font-family:'Liberation Sans',sans-serif;letter-spacing:-0.399px">r_cg_rtc.c</div>
<div class="t" style="left:74.5px;top:556.44px;font-size:12px;line-height:12px;color:#bababa;font-family:'Liberation Sans',sans-serif;letter-spacing:-0.346px">r_cg_rtc.h</div>
<div class="t" style="left:74.5px;top:574.44px;font-size:12px;line-height:12px;color:#bababa;font-family:'Liberation Sans',sans-serif;letter-spacing:-0.549px">r_cg_serial_user.c</div>
<div class="t" style="left:74.5px;top:592.44px;font-size:12px;line-height:12px;color:#bababa;font-family:'Liberation Sans',sans-serif;letter-spacing:-0.518px">r_cg_serial.c</div>
<div class="t" style="left:74.5px;top:610.44px;font-size:12px;line-height:12px;color:#bababa;font-family:'Liberation Sans',sans-serif;letter-spacing:-0.431px">r_cg_serial.h</div>
<div class="t" style="left:74.5px;top:628.44px;font-size:12px;line-height:12px;color:#bababa;font-family:'Liberation Sans',sans-serif;letter-spacing:-0.358px">r_cg_userdefine.h</div>
<div class="t" style="left:74.5px;top:646.44px;font-size:12px;line-height:12px;color:#bababa;font-family:'Liberation Sans',sans-serif;letter-spacing:-0.328px">r_cg_vector_table.c</div>
<div class="t" style="left:74.5px;top:664.44px;font-size:12px;line-height:12px;color:#bababa;font-family:'Liberation Sans',sans-serif;letter-spacing:-0.353px">r_hardware_setup.c</div>
<div class="t" style="left:74.5px;top:682.44px;font-size:12px;line-height:12px;color:#bababa;font-family:'Liberation Sans',sans-serif;letter-spacing:-0.427px">r_main.c</div>
<div class="t" style="left:74.5px;top:700.44px;font-size:12px;line-height:12px;color:#bababa;font-family:'Liberation Sans',sans-serif;letter-spacing:-0.380px">r_reset_program.asm</div>
<div class="t" style="left:58.5px;top:718.44px;font-size:12px;line-height:12px;color:#bababa;font-family:'Liberation Sans',sans-serif;letter-spacing:-0.169px">HardwareDebug</div>
<div class="t" style="left:58.5px;top:736.44px;font-size:12px;line-height:12px;color:#bababa;font-family:'Liberation Sans',sans-serif;letter-spacing:-0.336px">RL78G13_ondo_shitudo_20221213 HardwareDebug.launch</div>
<div class="t" style="left:58.5px;top:754.44px;font-size:12px;line-height:12px;color:#bababa;font-family:'Liberation Sans',sans-serif;"><span style="display:inline-block;width:47.10px;vertical-align:top;overflow:visible"><span style="display:inline-block;transform-origin:0 0;transform:scaleX(0.7850)">コード生成</span></span></div>
<div class="t" style="left:74.5px;top:772.44px;font-size:12px;line-height:12px;color:#bababa;font-family:'Liberation Sans',sans-serif;"><span style="display:inline-block;width:46.90px;vertical-align:top;overflow:visible"><span style="display:inline-block;transform-origin:0 0;transform:scaleX(0.9771)">周辺機能</span></span></div>
<div class="t" style="left:90.5px;top:790.44px;font-size:12px;line-height:12px;color:#bababa;font-family:'Liberation Sans',sans-serif;"><span style="display:inline-block;width:82.10px;vertical-align:top;overflow:visible"><span style="display:inline-block;transform-origin:0 0;transform:scaleX(0.8552)">クロック発生回路</span></span></div>
<div class="t" style="left:90.5px;top:808.44px;font-size:12px;line-height:12px;color:#bababa;font-family:'Liberation Sans',sans-serif;"><span style="display:inline-block;width:25.70px;vertical-align:top;overflow:visible"><span style="display:inline-block;transform-origin:0 0;transform:scaleX(0.7139)">ポート</span></span></div>
<div class="t" style="left:90.5px;top:826.44px;font-size:12px;line-height:12px;color:#bababa;font-family:'Liberation Sans',sans-serif;"><span style="display:inline-block;width:41.50px;vertical-align:top;overflow:visible"><span style="display:inline-block;transform-origin:0 0;transform:scaleX(0.8646)">割り込み</span></span></div>
<div class="t" style="left:90.5px;top:844.44px;font-size:12px;line-height:12px;color:#bababa;font-family:'Liberation Sans',sans-serif;"><span style="display:inline-block;width:36.10px;vertical-align:top;overflow:visible"><span style="display:inline-block;transform-origin:0 0;transform:scaleX(0.7521)">シリアル</span></span></div>
<div class="t" style="left:90.5px;top:862.44px;font-size:12px;line-height:12px;color:#bababa;font-family:'Liberation Sans',sans-serif;">A/D<span style="display:inline-block;width:43.88px;vertical-align:top;overflow:visible"><span style="display:inline-block;transform-origin:0 0;transform:scaleX(0.7314)">コンバータ</span></span></div>
<div class="t" style="left:90.5px;top:880.44px;font-size:12px;line-height:12px;color:#bababa;font-family:'Liberation Sans',sans-serif;"><span style="display:inline-block;width:26.20px;vertical-align:top;overflow:visible"><span style="display:inline-block;transform-origin:0 0;transform:scaleX(0.7278)">タイマ</span></span></div>
<div class="t" style="left:90.5px;top:898.44px;font-size:12px;line-height:12px;color:#bababa;font-family:'Liberation Sans',sans-serif;"><span style="display:inline-block;width:91.00px;vertical-align:top;overflow:visible"><span style="display:inline-block;transform-origin:0 0;transform:scaleX(0.6894)">ウォッチドッグ・タイマ</span></span></div>
<div class="t" style="left:90.5px;top:916.44px;font-size:12px;line-height:12px;color:#bababa;font-family:'Liberation Sans',sans-serif;"><span style="display:inline-block;width:94.10px;vertical-align:top;overflow:visible"><span style="display:inline-block;transform-origin:0 0;transform:scaleX(0.7129)">リアルタイム・クロック</span></span></div>
<div class="t" style="left:90.5px;top:934.44px;font-size:12px;line-height:12px;color:#bababa;font-family:'Liberation Sans',sans-serif;">12<span style="display:inline-block;width:115.34px;vertical-align:top;overflow:visible"><span style="display:inline-block;transform-origin:0 0;transform:scaleX(0.6866)">ビット・インターバル・タイマ</span></span></div>
<div class="t" style="left:90.5px;top:952.44px;font-size:12px;line-height:12px;color:#bababa;font-family:'Liberation Sans',sans-serif;"><span style="display:inline-block;width:59.38px;vertical-align:top;overflow:visible"><span style="display:inline-block;transform-origin:0 0;transform:scaleX(0.8247)">クロック出力</span></span>/<span style="display:inline-block;width:49.48px;vertical-align:top;overflow:visible"><span style="display:inline-block;transform-origin:0 0;transform:scaleX(0.8247)">ブザー出力</span></span></div>
<div class="t" style="left:90.5px;top:970.44px;font-size:12px;line-height:12px;color:#bababa;font-family:'Liberation Sans',sans-serif;">DMA<span style="display:inline-block;width:50.23px;vertical-align:top;overflow:visible"><span style="display:inline-block;transform-origin:0 0;transform:scaleX(0.6976)">コントローラ</span></span></div>
<div class="t" style="left:90.5px;top:988.44px;font-size:12px;line-height:12px;color:#bababa;font-family:'Liberation Sans',sans-serif;"><span style="display:inline-block;width:71.20px;vertical-align:top;overflow:visible"><span style="display:inline-block;transform-origin:0 0;transform:scaleX(0.9889)">電圧検出回路</span></span></div>
<div class="t" style="left:74.5px;top:1006.44px;font-size:12px;line-height:12px;color:#bababa;font-family:'Liberation Sans',sans-serif;"><span style="display:inline-block;width:69.80px;vertical-align:top;overflow:visible"><span style="display:inline-block;transform-origin:0 0;transform:scaleX(0.6463)">コード・プレビュー</span></span></div>
<div class="t" style="left:970px;top:94.02px;font-size:12.5px;line-height:12.5px;color:#f4faff;font-family:'Liberation Sans',sans-serif;letter-spacing:-0.228px">C/C++</div>
<div class="t" style="left:1035px;top:94.02px;font-size:12.5px;line-height:12.5px;color:#f0f0f0;font-family:'Liberation Sans',sans-serif;"><span style="display:inline-block;width:47.00px;vertical-align:top;overflow:visible"><span style="display:inline-block;transform-origin:0 0;transform:scaleX(0.7231)">コード生成</span></span></div>
<div class="t" style="left:1113px;top:94.02px;font-size:12.5px;line-height:12.5px;color:#f0f0f0;font-family:'Liberation Sans',sans-serif;"><span style="display:inline-block;width:37.00px;vertical-align:top;overflow:visible"><span style="display:inline-block;transform-origin:0 0;transform:scaleX(0.7115)">デバッグ</span></span></div>
<div class="t" style="left:1180px;top:94.02px;font-size:12.5px;line-height:12.5px;color:#f0f0f0;font-family:'Liberation Sans',sans-serif;letter-spacing:-0.919px">CMSIS Packs</div>
<div class="a" style="left:2px;top:1015px;width:460px;height:17px;background:#f0f0f0;"></div>
<div class="a" style="left:19px;top:1023px;width:388px;height:2px;background:#8a8a8a;"></div>
<div class="a" style="left:2px;top:1031px;width:460px;height:1px;background:#fafafa;"></div>
</body></html>
